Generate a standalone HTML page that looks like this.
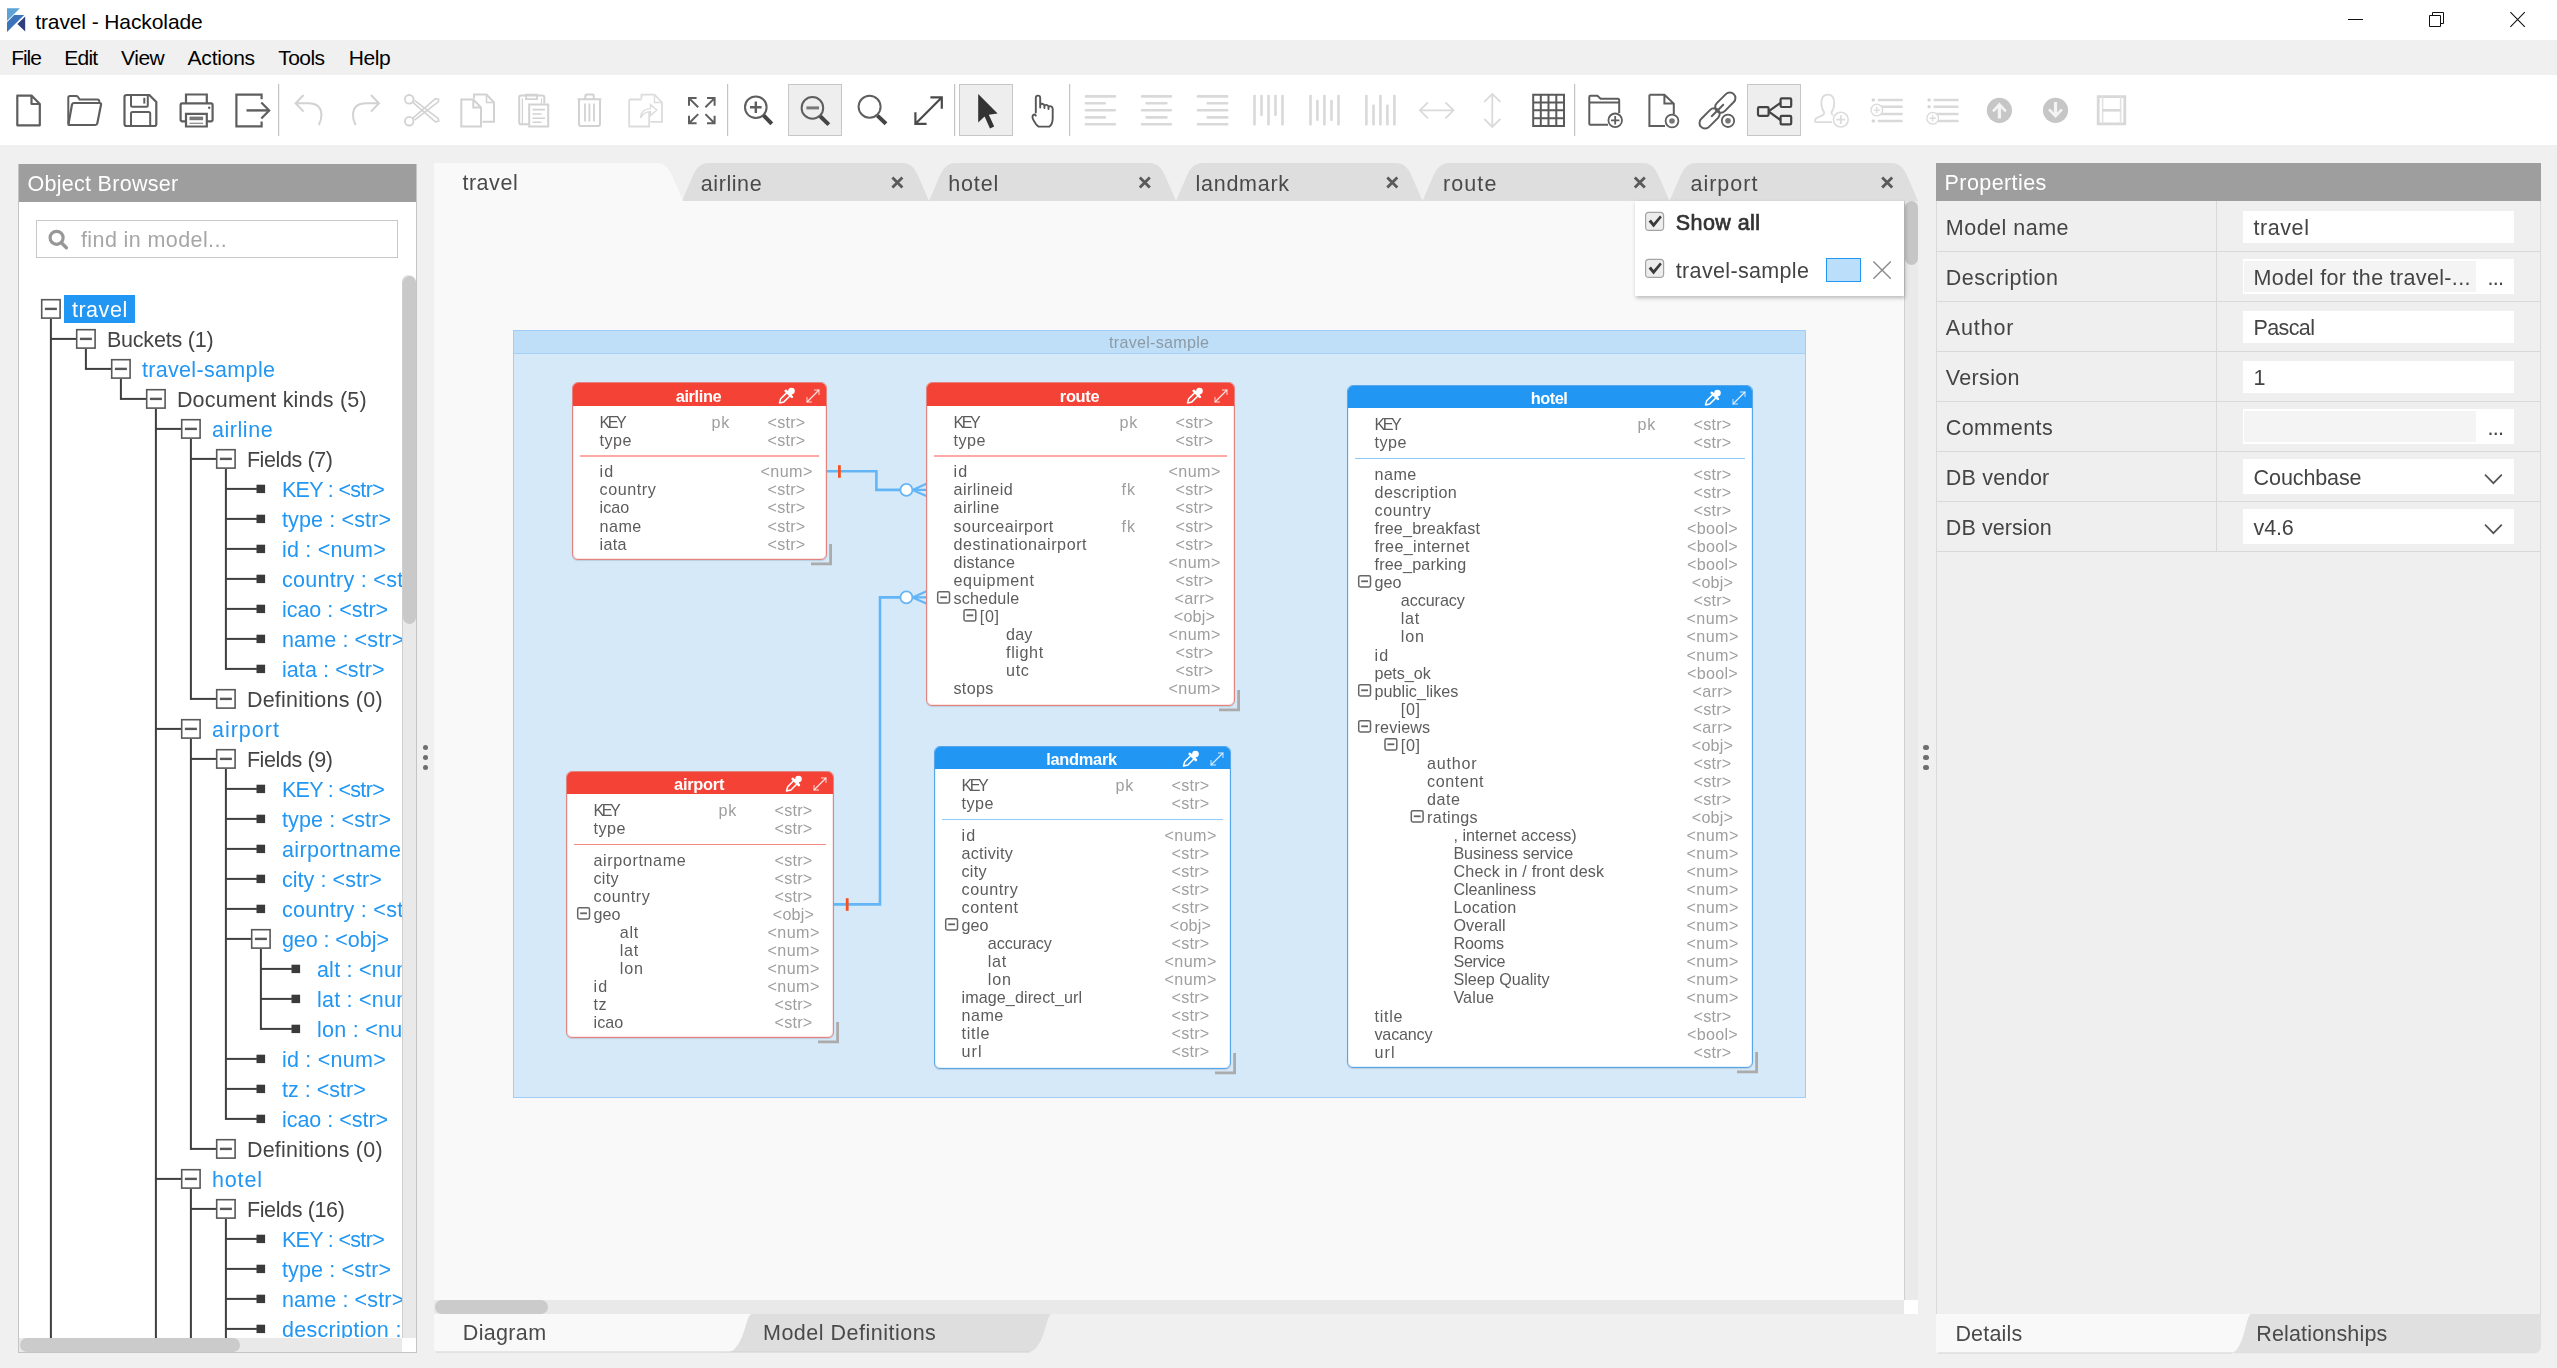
<!DOCTYPE html>
<html lang="en"><head><meta charset="utf-8"><title>travel - Hackolade</title>
<style>
html,body{margin:0;padding:0}
body{width:2557px;height:1368px;background:#f0f0f0;font-family:"Liberation Sans", sans-serif}
#r{position:relative;width:2557px;height:1368px;overflow:hidden;background:#f0f0f0}
#r div,#r span{position:absolute}
#r span{white-space:pre}
#tl{left:0;top:0;width:2557px;height:1368px;will-change:transform}
</style></head><body><div id="r">
<div style="left:0px;top:0px;width:2557px;height:40px;background:#ffffff;"></div>
<svg style="position:absolute;left:0;top:0" width="2557" height="40" viewBox="0 0 2557 40"><path d="M7,8.2 H19.9 L7,21 Z" fill="#5da3d6"/><path d="M14.2,15 H24.2 L7,32 V22.3 Z" fill="#3c74ba"/><path d="M25.2,16.4 V31.5 L17.4,23.9 Z" fill="#2e3f7d"/><path d="M2348,19.5 H2363" stroke="#111" stroke-width="1"/><path d="M2429.5,15.5 H2440.5 V26.5 H2429.5 Z M2432.5,15 V12.5 H2443.5 V23.5 H2441" stroke="#111" stroke-width="1" fill="none" stroke-linejoin="miter"/><path d="M2510.4,12.2 L2524.8,26.8 M2524.8,12.2 L2510.4,26.8" stroke="#111" stroke-width="1.1"/></svg>
<span style="left:35.2px;top:11px;font-size:21px;line-height:21px;color:#000;letter-spacing:-0.1px;">travel - Hackolade</span>
<div style="left:0px;top:40px;width:2557px;height:35px;background:#f0f0f0;"></div>
<span style="left:11.3px;top:47px;font-size:21px;line-height:21px;color:#000;letter-spacing:-1.11px;">File</span>
<span style="left:64.3px;top:47px;font-size:21px;line-height:21px;color:#000;letter-spacing:-0.8px;">Edit</span>
<span style="left:121.0px;top:47px;font-size:21px;line-height:21px;color:#000;letter-spacing:-0.45px;">View</span>
<span style="left:187.6px;top:47px;font-size:21px;line-height:21px;color:#000;letter-spacing:-0.23px;">Actions</span>
<span style="left:278.3px;top:47px;font-size:21px;line-height:21px;color:#000;letter-spacing:-0.56px;">Tools</span>
<span style="left:348.8px;top:47px;font-size:21px;line-height:21px;color:#000;letter-spacing:-0.47px;">Help</span>
<div style="left:0px;top:75px;width:2557px;height:70px;background:#ffffff;"></div>
<svg style="position:absolute;left:0;top:0" width="2557" height="150" viewBox="0 0 2557 150"><rect x="788.5" y="84.5" width="53.0" height="51" fill="#eeeeee" stroke="#c6c6c6" stroke-width="1"/><rect x="959.5" y="84.5" width="53.0" height="51" fill="#eeeeee" stroke="#c6c6c6" stroke-width="1"/><rect x="1747.5" y="84.5" width="53.0" height="51" fill="#eeeeee" stroke="#c6c6c6" stroke-width="1"/><rect x="278" y="84" width="1.2" height="52" fill="#c4c4c4"/><rect x="727" y="84" width="1.2" height="52" fill="#c4c4c4"/><rect x="954" y="84" width="1.2" height="52" fill="#c4c4c4"/><rect x="1069" y="84" width="1.2" height="52" fill="#c4c4c4"/><rect x="1574" y="84" width="1.2" height="52" fill="#c4c4c4"/><path d="M17.3,95.6 H31.5 L39.8,104 V125.3 H17.3 Z M31.5,95.6 V104 H39.8" stroke="#5e5e5e" stroke-width="2.2" fill="none" stroke-linejoin="round"/><path d="M68.3,124 V97.6 Q68.3,96 70,96 H76 Q77.3,96 78,97 L79.6,99.4 H97.3 Q99.3,99.4 99.3,101.4 V103" stroke="#5e5e5e" stroke-width="2" fill="none" /><path d="M68.4,124.6 L72,104.6 Q72.4,103 74,103 H99.6 Q101.4,103 101,104.8 L97.3,123.4 Q97,125 95.3,125 H69.5 Q68.2,125 68.4,124.2" stroke="#5e5e5e" stroke-width="2.2" fill="none" /><path d="M126.5,95 H149.3 L156.3,102 V124 Q156.3,126 154.3,126 H126.5 Q124.5,126 124.5,124 V97 Q124.5,95 126.5,95 Z" stroke="#5e5e5e" stroke-width="2.2" fill="none" /><path d="M131,95.5 V105.3 Q131,106.8 132.5,106.8 H146.3 Q147.8,106.8 147.8,105.3 V95.5" stroke="#5e5e5e" stroke-width="2" fill="none" /><path d="M144.3,97.8 V103.6" stroke="#5e5e5e" stroke-width="2" fill="none" /><path d="M131,126 V113.6 Q131,112 132.5,112 H148.6 Q150.2,112 150.2,113.6 V126" stroke="#5e5e5e" stroke-width="2" fill="none" /><path d="M186,103 V94.5 H206.8 V103" stroke="#5e5e5e" stroke-width="2.2" fill="none" /><path d="M186,121.3 H182.2 Q180.6,121.3 180.6,119.6 V105 Q180.6,103.3 182.2,103.3 H211 Q212.6,103.3 212.6,105 V119.6 Q212.6,121.3 211,121.3 H207" stroke="#5e5e5e" stroke-width="2.2" fill="none" /><path d="M186,113.8 H206.8 V126.5 H186 Z" stroke="#5e5e5e" stroke-width="2.2" fill="none" /><rect x="189.5" y="116.6" width="13.6" height="3.6" fill="#777"/><path d="M189.5,123.3 H203" stroke="#888" stroke-width="1.2" fill="none" /><circle cx="209.2" cy="107.7" r="1.2" fill="#5e5e5e"/><path d="M261.6,99.3 V94.6 H236.4 V126.4 H261.6 V121.6" stroke="#5e5e5e" stroke-width="2.2" fill="none" /><path d="M246.5,110.4 H268.6" stroke="#5e5e5e" stroke-width="2.4" fill="none" /><path d="M261.3,102.4 L269.2,110.4 L261.3,118.4" stroke="#5e5e5e" stroke-width="2.2" fill="none" /><path d="M303.6,95 L295.6,103.3 L303.6,111.6 M295.8,103.3 H308 C318,103.3 321.4,108.5 321.4,115 C321.4,119 320.5,122 318.8,125" stroke="#d2d2d2" stroke-width="2" fill="none" /><path d="M371,95 L379,103.3 L371,111.6 M378.8,103.3 H366.5 C356.5,103.3 353,108.5 353,115 C353,119 354,122 355.6,125" stroke="#d2d2d2" stroke-width="2" fill="none" /><circle cx="409.2" cy="99.3" r="4.3" fill="none" stroke="#d2d2d2" stroke-width="1.8"/><circle cx="409.2" cy="121.2" r="4.3" fill="none" stroke="#d2d2d2" stroke-width="1.8"/><path d="M412.6,102.2 L435.5,121.8 L438.7,121.2 L438.3,118.6 L414.5,100.4" stroke="#d2d2d2" stroke-width="1.6" fill="none" /><path d="M412.6,118.3 L435.5,98.7 L438.7,99.3 L438.3,101.9 L414.5,120.1" stroke="#d2d2d2" stroke-width="1.6" fill="none" /><path d="M474,98.5 V94.6 H486.5 L494,102.5 V121.8 H482.5" stroke="#d2d2d2" stroke-width="2" fill="none" /><path d="M486.5,94.6 V102.5 H494" stroke="#d2d2d2" stroke-width="1.6" fill="none" /><path d="M461.3,99.5 H473.3 L481,107.5 V126.5 H461.3 Z M473.3,99.5 V107.5 H481" stroke="#d2d2d2" stroke-width="2" fill="none" /><path d="M528.5,124.2 H521 Q519.2,124.2 519.2,122.4 V97.2 Q519.2,95.4 521,95.4 H542.5 Q544.3,95.4 544.3,97.2 V103.6" stroke="#d2d2d2" stroke-width="2" fill="none" /><path d="M522.4,124 V98.6 M541.5,98.6 V103.4" stroke="#d2d2d2" stroke-width="1.2" fill="none" /><path d="M526,94.6 H537 V99.2 H526 Z" stroke="#d2d2d2" stroke-width="1.8" fill="none" /><path d="M529.2,104.4 H548.2 V126.6 H529.2 Z" stroke="#d2d2d2" stroke-width="2" fill="none" /><path d="M532.5,109.6 H545 M532.5,114 H541.5 M532.5,118.3 H545 M532.5,122.3 H541.5" stroke="#d2d2d2" stroke-width="1.6" fill="none" /><path d="M577.6,99.3 H601.3 M585.3,98.6 V96 Q585.3,94.6 586.7,94.6 H592.3 Q593.8,94.6 593.8,96 V98.6" stroke="#d2d2d2" stroke-width="2" fill="none" /><path d="M579,99.6 V124 Q579,126 581,126 H598 Q600,126 600,124 V99.6" stroke="#d2d2d2" stroke-width="2" fill="none" /><path d="M585,103.5 V121.6 M589.4,103.5 V121.6 M594,103.5 V121.6" stroke="#d2d2d2" stroke-width="1.8" fill="none" /><path d="M641.5,98.5 V94.6 H654.5 L662,102.5 V121.8 H650.5" stroke="#dcdcdc" stroke-width="1.8" fill="none" /><path d="M654.5,94.6 V102.5 H662" stroke="#dcdcdc" stroke-width="1.4" fill="none" /><path d="M629.2,99.5 H641.5 M649.2,112 V126.5 H629.2 V99.5" stroke="#dcdcdc" stroke-width="1.8" fill="none" /><path d="M640.5,118 C641,111 645,108.6 650.5,108.6 V104.6 L656.8,110 L650.5,115.6 V111.6 C646,111.6 643,113 640.5,118 Z" stroke="#dcdcdc" stroke-width="1.4" fill="none" /><path d="M698.1999999999999,107.3 L689.0,98.10000000000001 M696.6,98.10000000000001 H689.0 V105.7" stroke="#5e5e5e" stroke-width="2" fill="none" /><path d="M698.1999999999999,114.10000000000001 L689.0,123.3 M696.6,123.3 H689.0 V115.7" stroke="#5e5e5e" stroke-width="2" fill="none" /><path d="M705.4,107.3 L714.5999999999999,98.10000000000001 M706.9999999999999,98.10000000000001 H714.5999999999999 V105.7" stroke="#5e5e5e" stroke-width="2" fill="none" /><path d="M705.4,114.10000000000001 L714.5999999999999,123.3 M706.9999999999999,123.3 H714.5999999999999 V115.7" stroke="#5e5e5e" stroke-width="2" fill="none" /><circle cx="755.8" cy="107.2" r="10.8" fill="none" stroke="#5e5e5e" stroke-width="2"/><path d="M750,107.2 H761.6 M755.8,101.4 V113" stroke="#5e5e5e" stroke-width="2.4" fill="none" /><path d="M763.6,115.4 L771.8,123.8" stroke="#444" stroke-width="4" fill="none" /><circle cx="812.4" cy="107.9" r="10.8" fill="none" stroke="#5e5e5e" stroke-width="2"/><path d="M806.4,107.9 H819" stroke="#777" stroke-width="3" fill="none" /><path d="M820.2,116.2 L828.8,124.6" stroke="#444" stroke-width="4" fill="none" /><circle cx="869.6" cy="106.8" r="11" fill="none" stroke="#5e5e5e" stroke-width="2"/><path d="M877.4,115.6 L886,123.8" stroke="#444" stroke-width="4" fill="none" /><path d="M916,123.2 L941.2,98 M930.4,97.4 H941.8 V108.8 M915.4,112.2 V123.8 H926.6" stroke="#4a4a4a" stroke-width="2.2" fill="none" /><path d="M978.2,94 V122.4 L984.6,116.6 L990,128.4 L994.2,126.4 L988.8,114.8 L997.6,113.4 Z" fill="#333"/><path d="M1035.8,112.6 V98 Q1035.8,95.6 1038,95.6 Q1040.2,95.6 1040.2,98 V107.5 M1040.2,105.4 Q1040.4,103.6 1042.3,103.8 Q1044.2,104 1044.4,106 V108 M1044.4,106.3 Q1044.8,104.6 1046.6,104.9 Q1048.3,105.2 1048.5,107 V109 M1048.5,107.4 Q1049,105.8 1050.7,106.2 Q1052.6,106.6 1052.7,108.8 V118 Q1052.7,124 1049.5,126.6 H1038.5 Q1036,125 1033.6,120.4 Q1031.6,116.6 1033.2,115 Q1034.6,114 1035.8,115.6" stroke="#555" stroke-width="1.9" fill="none" stroke-linejoin="round" stroke-linecap="round"/><rect x="1084.7" y="95.10000000000001" width="31.3" height="2.6" rx="1" fill="#d9d9d9"/><rect x="1084.7" y="102.0" width="21.3" height="2.6" rx="1" fill="#d9d9d9"/><rect x="1084.7" y="109.0" width="31.3" height="2.6" rx="1" fill="#d9d9d9"/><rect x="1084.7" y="116.10000000000001" width="21.3" height="2.6" rx="1" fill="#d9d9d9"/><rect x="1084.7" y="123.0" width="31.3" height="2.6" rx="1" fill="#d9d9d9"/><rect x="1140.8" y="95.10000000000001" width="31.2" height="2.6" rx="1" fill="#d9d9d9"/><rect x="1145.4" y="102.0" width="22.2" height="2.6" rx="1" fill="#d9d9d9"/><rect x="1140.8" y="109.0" width="31.2" height="2.6" rx="1" fill="#d9d9d9"/><rect x="1145.4" y="116.10000000000001" width="22.2" height="2.6" rx="1" fill="#d9d9d9"/><rect x="1140.8" y="123.0" width="31.2" height="2.6" rx="1" fill="#d9d9d9"/><rect x="1196.7" y="95.10000000000001" width="31.7" height="2.6" rx="1" fill="#d9d9d9"/><rect x="1206.5" y="102.0" width="21.9" height="2.6" rx="1" fill="#d9d9d9"/><rect x="1196.7" y="109.0" width="31.7" height="2.6" rx="1" fill="#d9d9d9"/><rect x="1206.5" y="116.10000000000001" width="21.9" height="2.6" rx="1" fill="#d9d9d9"/><rect x="1196.7" y="123.0" width="31.7" height="2.6" rx="1" fill="#d9d9d9"/><rect x="1253.2" y="94.8" width="2.6" height="30.6" rx="1" fill="#d9d9d9"/><rect x="1260.2" y="94.8" width="2.6" height="21.3" rx="1" fill="#d9d9d9"/><rect x="1267.2" y="94.8" width="2.6" height="30.6" rx="1" fill="#d9d9d9"/><rect x="1274.2" y="94.8" width="2.6" height="21.3" rx="1" fill="#d9d9d9"/><rect x="1281.2" y="94.8" width="2.6" height="30.6" rx="1" fill="#d9d9d9"/><rect x="1309.2" y="94.8" width="2.6" height="30.6" rx="1" fill="#d9d9d9"/><rect x="1316.1000000000001" y="99.7" width="2.6" height="21.3" rx="1" fill="#d9d9d9"/><rect x="1323.1000000000001" y="94.8" width="2.6" height="30.6" rx="1" fill="#d9d9d9"/><rect x="1330.2" y="99.7" width="2.6" height="21.3" rx="1" fill="#d9d9d9"/><rect x="1337.2" y="94.8" width="2.6" height="30.6" rx="1" fill="#d9d9d9"/><rect x="1365.1000000000001" y="94.8" width="2.6" height="30.6" rx="1" fill="#d9d9d9"/><rect x="1372.2" y="104.6" width="2.6" height="20.8" rx="1" fill="#d9d9d9"/><rect x="1379.1000000000001" y="94.8" width="2.6" height="30.6" rx="1" fill="#d9d9d9"/><rect x="1386.1000000000001" y="104.6" width="2.6" height="20.8" rx="1" fill="#d9d9d9"/><rect x="1393.1000000000001" y="94.8" width="2.6" height="30.6" rx="1" fill="#d9d9d9"/><path d="M1420,110.3 H1453.4 M1427.9,102.4 L1419.9,110.3 L1427.9,118.3 M1445.4,102.4 L1453.5,110.3 L1445.4,118.3" stroke="#dadada" stroke-width="1.8" fill="none" /><path d="M1492.3,94 V126.8 M1484.3,101.9 L1492.3,93.9 L1500.4,101.9 M1484.3,118.9 L1492.3,126.9 L1500.4,118.9" stroke="#dadada" stroke-width="1.8" fill="none" /><path d="M1533.2,93.8 V127 M1540.8,93.8 V127 M1548.5,93.8 V127 M1556.3,93.8 V127 M1564,93.8 V127 M1532.2,94.8 H1565 M1532.2,102.5 H1565 M1532.2,110.3 H1565 M1532.2,118.2 H1565 M1532.2,126 H1565 " stroke="#5a5a5a" stroke-width="2" fill="none" /><path d="M1589.3,124.8 V97 Q1589.3,95.8 1590.5,95.8 H1597.4 L1600.6,98.8 H1617.6 Q1619.2,98.8 1619.2,100.4 V113 M1589.3,102.6 H1619.2 M1589.3,124.8 H1608" stroke="#5e5e5e" stroke-width="2" fill="none" /><circle cx="1615.2" cy="120.3" r="6.8" fill="#fff" stroke="#5e5e5e" stroke-width="1.8"/><path d="M1611,120.3 H1619.4 M1615.2,116.1 V124.5" stroke="#5e5e5e" stroke-width="1.8" fill="none" /><path d="M1649.4,94.7 H1664.4 L1673.8,103.6 V114 M1649.4,94.7 V125.9 H1665 M1664.4,94.7 V103.6 H1673.8" stroke="#5e5e5e" stroke-width="2" fill="none" /><circle cx="1672" cy="121" r="6.4" fill="#fff" stroke="#5e5e5e" stroke-width="1.8"/><circle cx="1672" cy="121" r="2.8" fill="#777"/><rect x="-12" y="-5.6" width="24" height="11.2" rx="5.6" fill="none" stroke="#5e5e5e" stroke-width="2" transform="translate(1725.3,102.6) rotate(-45)"/><rect x="-12" y="-5.6" width="24" height="11.2" rx="5.6" fill="none" stroke="#5e5e5e" stroke-width="2" transform="translate(1709.6,118.4) rotate(-45)"/><path d="M1711.2,116.8 L1723.8,104.2" stroke="#5e5e5e" stroke-width="2" fill="none" /><circle cx="1728" cy="120.8" r="6.2" fill="#fff" stroke="#5e5e5e" stroke-width="1.8"/><circle cx="1728" cy="120.8" r="2.8" fill="#777"/><path d="M1768.5,111.4 L1780.5,102.8 M1768.5,111.4 L1780.5,120" stroke="#444" stroke-width="2.2" fill="none" /><rect x="1758" y="107.2" width="10.6" height="8.6" rx="1.2" fill="#eee" stroke="#444" stroke-width="2.2"/><rect x="1780.6" y="98.4" width="10.6" height="8.6" rx="1.2" fill="#eee" stroke="#444" stroke-width="2.2"/><rect x="1780.6" y="115.8" width="10.6" height="8.6" rx="1.2" fill="#eee" stroke="#444" stroke-width="2.2"/><path d="M1815,122.2 V120.4 Q1815,118.6 1817.4,117.6 L1822.4,115.4 Q1824.4,114.4 1824.2,112.4 Q1821.4,108.6 1821.4,103 Q1821.4,94.6 1827.8,94.6 Q1834.2,94.6 1834.2,103 Q1834.2,108.6 1831.4,112.4 Q1831.3,114.2 1833,115.2 M1815,122.2 H1832" stroke="#dcdcdc" stroke-width="1.8" fill="none" /><circle cx="1840.8" cy="119.6" r="7.4" fill="#fff" stroke="#dcdcdc" stroke-width="1.6"/><path d="M1836.4,119.6 H1845.2 M1840.8,115.2 V124" stroke="#dcdcdc" stroke-width="1.8" fill="none" /><rect x="1877.7" y="98.7" width="25.1" height="2.6" rx="1" fill="#d9d9d9"/><rect x="1871.8" y="98.5" width="3" height="3" rx="0.8" fill="#d4d4d4"/><rect x="1877.7" y="105.5" width="25.1" height="2.6" rx="1" fill="#d9d9d9"/><rect x="1877.7" y="112.7" width="25.1" height="2.6" rx="1" fill="#d9d9d9"/><rect x="1877.7" y="119.7" width="25.1" height="2.6" rx="1" fill="#d9d9d9"/><rect x="1871.8" y="119.5" width="3" height="3" rx="0.8" fill="#d4d4d4"/><circle cx="1876.8" cy="110.1" r="5.8" fill="#fff" stroke="#dcdcdc" stroke-width="1.4"/><path d="M1873.6,110.1 H1880.0 M1876.8,106.89999999999999 V113.3" stroke="#dcdcdc" stroke-width="1.4" fill="none" /><rect x="1933.5" y="98.7" width="25.2" height="2.6" rx="1" fill="#d9d9d9"/><rect x="1927.6" y="98.5" width="3" height="3" rx="0.8" fill="#d4d4d4"/><rect x="1933.5" y="105.5" width="25.2" height="2.6" rx="1" fill="#d9d9d9"/><rect x="1927.6" y="105.3" width="3" height="3" rx="0.8" fill="#d4d4d4"/><rect x="1933.5" y="112.7" width="25.2" height="2.6" rx="1" fill="#d9d9d9"/><rect x="1933.5" y="119.7" width="25.2" height="2.6" rx="1" fill="#d9d9d9"/><circle cx="1932.7" cy="118.3" r="5.8" fill="#fff" stroke="#dcdcdc" stroke-width="1.4"/><path d="M1929.5,118.3 H1935.9 M1932.7,115.1 V121.5" stroke="#dcdcdc" stroke-width="1.4" fill="none" /><circle cx="1999.4" cy="110.3" r="12.6" fill="#c6c6c6"/><path d="M1999.4,102.6 L2006.8000000000002,110.4 L2005.0,112.2 L2001.0,108.2 V118.6 H1997.8000000000002 V108.2 L1993.8000000000002,112.2 L1992.0,110.4 Z" fill="#f4f4f4"/><circle cx="2055.5" cy="110.3" r="12.6" fill="#c6c6c6"/><path d="M2055.5,118 L2062.9,110.2 L2061.1,108.4 L2057.1,112.4 V102 H2053.9 V112.4 L2049.9,108.4 L2048.1,110.2 Z" fill="#f4f4f4"/><path d="M2098.2,96.6 H2124.8 V123.8 H2098.2 Z" stroke="#d8d8d8" stroke-width="2.8" fill="none" /><path d="M2102.6,96.6 V123.8 M2120.6,96.6 V123.8" stroke="#e2e2e2" stroke-width="1.6" fill="none" /><path d="M2102.6,110.3 H2120.6" stroke="#d8d8d8" stroke-width="2.6" fill="none" /></svg>
<div style="left:18px;top:164px;width:399px;height:1188.5px;background:#ffffff;box-sizing:border-box;border:1px solid #c4c4c4;border-top:0"></div>
<div style="left:19px;top:164px;width:397px;height:37.5px;background:#9e9e9e;"></div>
<div style="left:36px;top:220px;width:362px;height:37.5px;background:#ffffff;box-sizing:border-box;border:1px solid #c8c8c8"></div>
<svg style="position:absolute;left:44px;top:226px" width="28" height="28" viewBox="44 226 28 28"><circle cx="56.6" cy="237.8" r="6.5" fill="none" stroke="#979797" stroke-width="3.2"/><path d="M61.6,243 L66.4,247.8" stroke="#979797" stroke-width="3.4" stroke-linecap="round"/></svg>
<div style="left:20px;top:258px;width:382px;height:1080px;overflow:hidden"><div style="left:-20px;top:-258px;width:500px;height:1368px">
<div style="left:64px;top:295px;width:71px;height:28px;background:#2196f3;"></div>
<svg style="position:absolute;left:0;top:0" width="420" height="1368" viewBox="0 0 420 1368"><rect x="49.9" y="318.9" width="2" height="1021.1" fill="#3f3f3f"/><rect x="84.9" y="348.9" width="2" height="21.0" fill="#3f3f3f"/><rect x="119.9" y="378.9" width="2" height="21.0" fill="#3f3f3f"/><rect x="154.9" y="408.9" width="2" height="931.1" fill="#3f3f3f"/><rect x="189.9" y="438.9" width="2" height="261.0" fill="#3f3f3f"/><rect x="224.9" y="468.9" width="2" height="201.0" fill="#3f3f3f"/><rect x="189.9" y="738.9" width="2" height="411.0" fill="#3f3f3f"/><rect x="224.9" y="768.9" width="2" height="351.0" fill="#3f3f3f"/><rect x="259.9" y="948.9" width="2" height="81.0" fill="#3f3f3f"/><rect x="189.9" y="1188.9" width="2" height="151.1" fill="#3f3f3f"/><rect x="224.9" y="1218.9" width="2" height="121.1" fill="#3f3f3f"/><rect x="41.7" y="299.7" width="18.4" height="18.4" fill="#fff" stroke="#585858" stroke-width="1.6"/><rect x="44.9" y="307.7" width="12" height="2.4" fill="#585858"/><rect x="50.9" y="337.9" width="25.5" height="2" fill="#3f3f3f"/><rect x="76.7" y="329.7" width="18.4" height="18.4" fill="#fff" stroke="#585858" stroke-width="1.6"/><rect x="79.9" y="337.7" width="12" height="2.4" fill="#585858"/><rect x="85.9" y="367.9" width="25.5" height="2" fill="#3f3f3f"/><rect x="111.7" y="359.7" width="18.4" height="18.4" fill="#fff" stroke="#585858" stroke-width="1.6"/><rect x="114.9" y="367.7" width="12" height="2.4" fill="#585858"/><rect x="120.9" y="397.9" width="25.5" height="2" fill="#3f3f3f"/><rect x="146.7" y="389.7" width="18.4" height="18.4" fill="#fff" stroke="#585858" stroke-width="1.6"/><rect x="149.9" y="397.7" width="12" height="2.4" fill="#585858"/><rect x="155.9" y="427.9" width="25.5" height="2" fill="#3f3f3f"/><rect x="181.7" y="419.7" width="18.4" height="18.4" fill="#fff" stroke="#585858" stroke-width="1.6"/><rect x="184.9" y="427.7" width="12" height="2.4" fill="#585858"/><rect x="190.9" y="457.9" width="25.5" height="2" fill="#3f3f3f"/><rect x="216.7" y="449.7" width="18.4" height="18.4" fill="#fff" stroke="#585858" stroke-width="1.6"/><rect x="219.9" y="457.7" width="12" height="2.4" fill="#585858"/><rect x="225.9" y="487.9" width="31.0" height="2" fill="#3f3f3f"/><rect x="256.5" y="484.7" width="8.6" height="8.4" fill="#3a3a3a"/><rect x="225.9" y="517.9" width="31.0" height="2" fill="#3f3f3f"/><rect x="256.5" y="514.7" width="8.6" height="8.4" fill="#3a3a3a"/><rect x="225.9" y="547.9" width="31.0" height="2" fill="#3f3f3f"/><rect x="256.5" y="544.7" width="8.6" height="8.4" fill="#3a3a3a"/><rect x="225.9" y="577.9" width="31.0" height="2" fill="#3f3f3f"/><rect x="256.5" y="574.7" width="8.6" height="8.4" fill="#3a3a3a"/><rect x="225.9" y="607.9" width="31.0" height="2" fill="#3f3f3f"/><rect x="256.5" y="604.7" width="8.6" height="8.4" fill="#3a3a3a"/><rect x="225.9" y="637.9" width="31.0" height="2" fill="#3f3f3f"/><rect x="256.5" y="634.7" width="8.6" height="8.4" fill="#3a3a3a"/><rect x="225.9" y="667.9" width="31.0" height="2" fill="#3f3f3f"/><rect x="256.5" y="664.7" width="8.6" height="8.4" fill="#3a3a3a"/><rect x="190.9" y="697.9" width="25.5" height="2" fill="#3f3f3f"/><rect x="216.7" y="689.7" width="18.4" height="18.4" fill="#fff" stroke="#585858" stroke-width="1.6"/><rect x="219.9" y="697.7" width="12" height="2.4" fill="#585858"/><rect x="155.9" y="727.9" width="25.5" height="2" fill="#3f3f3f"/><rect x="181.7" y="719.7" width="18.4" height="18.4" fill="#fff" stroke="#585858" stroke-width="1.6"/><rect x="184.9" y="727.7" width="12" height="2.4" fill="#585858"/><rect x="190.9" y="757.9" width="25.5" height="2" fill="#3f3f3f"/><rect x="216.7" y="749.7" width="18.4" height="18.4" fill="#fff" stroke="#585858" stroke-width="1.6"/><rect x="219.9" y="757.7" width="12" height="2.4" fill="#585858"/><rect x="225.9" y="787.9" width="31.0" height="2" fill="#3f3f3f"/><rect x="256.5" y="784.7" width="8.6" height="8.4" fill="#3a3a3a"/><rect x="225.9" y="817.9" width="31.0" height="2" fill="#3f3f3f"/><rect x="256.5" y="814.7" width="8.6" height="8.4" fill="#3a3a3a"/><rect x="225.9" y="847.9" width="31.0" height="2" fill="#3f3f3f"/><rect x="256.5" y="844.7" width="8.6" height="8.4" fill="#3a3a3a"/><rect x="225.9" y="877.9" width="31.0" height="2" fill="#3f3f3f"/><rect x="256.5" y="874.7" width="8.6" height="8.4" fill="#3a3a3a"/><rect x="225.9" y="907.9" width="31.0" height="2" fill="#3f3f3f"/><rect x="256.5" y="904.7" width="8.6" height="8.4" fill="#3a3a3a"/><rect x="225.9" y="937.9" width="25.5" height="2" fill="#3f3f3f"/><rect x="251.7" y="929.7" width="18.4" height="18.4" fill="#fff" stroke="#585858" stroke-width="1.6"/><rect x="254.9" y="937.7" width="12" height="2.4" fill="#585858"/><rect x="260.9" y="967.9" width="31.0" height="2" fill="#3f3f3f"/><rect x="291.5" y="964.7" width="8.6" height="8.4" fill="#3a3a3a"/><rect x="260.9" y="997.9" width="31.0" height="2" fill="#3f3f3f"/><rect x="291.5" y="994.7" width="8.6" height="8.4" fill="#3a3a3a"/><rect x="260.9" y="1027.9" width="31.0" height="2" fill="#3f3f3f"/><rect x="291.5" y="1024.7" width="8.6" height="8.4" fill="#3a3a3a"/><rect x="225.9" y="1057.9" width="31.0" height="2" fill="#3f3f3f"/><rect x="256.5" y="1054.7" width="8.6" height="8.4" fill="#3a3a3a"/><rect x="225.9" y="1087.9" width="31.0" height="2" fill="#3f3f3f"/><rect x="256.5" y="1084.7" width="8.6" height="8.4" fill="#3a3a3a"/><rect x="225.9" y="1117.9" width="31.0" height="2" fill="#3f3f3f"/><rect x="256.5" y="1114.7" width="8.6" height="8.4" fill="#3a3a3a"/><rect x="190.9" y="1147.9" width="25.5" height="2" fill="#3f3f3f"/><rect x="216.7" y="1139.7" width="18.4" height="18.4" fill="#fff" stroke="#585858" stroke-width="1.6"/><rect x="219.9" y="1147.7" width="12" height="2.4" fill="#585858"/><rect x="155.9" y="1177.9" width="25.5" height="2" fill="#3f3f3f"/><rect x="181.7" y="1169.7" width="18.4" height="18.4" fill="#fff" stroke="#585858" stroke-width="1.6"/><rect x="184.9" y="1177.7" width="12" height="2.4" fill="#585858"/><rect x="190.9" y="1207.9" width="25.5" height="2" fill="#3f3f3f"/><rect x="216.7" y="1199.7" width="18.4" height="18.4" fill="#fff" stroke="#585858" stroke-width="1.6"/><rect x="219.9" y="1207.7" width="12" height="2.4" fill="#585858"/><rect x="225.9" y="1237.9" width="31.0" height="2" fill="#3f3f3f"/><rect x="256.5" y="1234.7" width="8.6" height="8.4" fill="#3a3a3a"/><rect x="225.9" y="1267.9" width="31.0" height="2" fill="#3f3f3f"/><rect x="256.5" y="1264.7" width="8.6" height="8.4" fill="#3a3a3a"/><rect x="225.9" y="1297.9" width="31.0" height="2" fill="#3f3f3f"/><rect x="256.5" y="1294.7" width="8.6" height="8.4" fill="#3a3a3a"/><rect x="225.9" y="1327.9" width="31.0" height="2" fill="#3f3f3f"/><rect x="256.5" y="1324.7" width="8.6" height="8.4" fill="#3a3a3a"/></svg>
</div></div>
<div style="left:402px;top:201.5px;width:14px;height:1136.5px;background:#ffffff;"></div>
<div style="left:402px;top:275px;width:14px;height:1063px;background:#e9e9e9;box-sizing:border-box;border-left:1px solid #cfcfcf;border-radius:7px 7px 0 0"></div>
<div style="left:402.6px;top:276px;width:13.2px;height:348px;background:#c9c9c9;border-radius:6.6px"></div>
<div style="left:19px;top:1338px;width:383px;height:14px;background:#e9e9e9;"></div>
<div style="left:20px;top:1338px;width:219.5px;height:14px;background:#cbcbcb;border-radius:7px"></div>
<div style="left:402px;top:1338px;width:14px;height:14px;background:#ffffff;"></div>
<div style="left:18px;top:1352px;width:399px;height:1px;background:#c4c4c4;"></div>
<div style="left:422.7px;top:744.8px;width:5.2px;height:5.2px;background:#6e6e6e;border-radius:50%"></div>
<div style="left:422.7px;top:754.8px;width:5.2px;height:5.2px;background:#6e6e6e;border-radius:50%"></div>
<div style="left:422.7px;top:764.8px;width:5.2px;height:5.2px;background:#6e6e6e;border-radius:50%"></div>
<div style="left:1923.4px;top:744.8px;width:5.2px;height:5.2px;background:#6e6e6e;border-radius:50%"></div>
<div style="left:1923.4px;top:754.8px;width:5.2px;height:5.2px;background:#6e6e6e;border-radius:50%"></div>
<div style="left:1923.4px;top:764.8px;width:5.2px;height:5.2px;background:#6e6e6e;border-radius:50%"></div>
<div style="left:434px;top:201px;width:1484px;height:1112.5px;background:#f9f9f9;"></div>
<svg style="position:absolute;left:0;top:150px" width="2557" height="60" viewBox="0 150 2557 60"><defs><linearGradient id="tg" x1="0" y1="0" x2="0" y2="1"><stop offset="0" stop-color="#e0e0e0"/><stop offset="1" stop-color="#dcdcdc"/></linearGradient></defs><path d="M682.0,201 L691.0,180 C695.0,170 699.0,163 709.0,163 H902.0 C912.0,163 916.0,170 920.0,180 L929.0,201 Z" fill="#dedede"/><path d="M929.0,201 L938.0,180 C942.0,170 946.0,163 956.0,163 H1149.0 C1159.0,163 1163.0,170 1167.0,180 L1176.0,201 Z" fill="#dedede"/><path d="M1176.0,201 L1185.0,180 C1189.0,170 1193.0,163 1203.0,163 H1395.5 C1405.5,163 1409.5,170 1413.5,180 L1422.5,201 Z" fill="#dedede"/><path d="M1422.5,201 L1431.5,180 C1435.5,170 1439.5,163 1449.5,163 H1642.5 C1652.5,163 1656.5,170 1660.5,180 L1669.5,201 Z" fill="#dedede"/><path d="M1669.5,201 L1678.5,180 C1682.5,170 1686.5,163 1696.5,163 H1891.0 C1901.0,163 1905.0,170 1909.0,180 L1918.0,201 Z" fill="#dedede"/><path d="M434,201 V163 H656 C666,163 670,170 674,180 L683,201 Z" fill="#f9f9f9"/><path d="M892.4,177.6 L902.4,187.6 M902.4,177.6 L892.4,187.6" stroke="#5a5a5a" stroke-width="2.8"/><path d="M1139.8,177.6 L1149.8,187.6 M1149.8,177.6 L1139.8,187.6" stroke="#5a5a5a" stroke-width="2.8"/><path d="M1387.3,177.6 L1397.3,187.6 M1397.3,177.6 L1387.3,187.6" stroke="#5a5a5a" stroke-width="2.8"/><path d="M1634.8,177.6 L1644.8,187.6 M1644.8,177.6 L1634.8,187.6" stroke="#5a5a5a" stroke-width="2.8"/><path d="M1882.2,177.6 L1892.2,187.6 M1892.2,177.6 L1882.2,187.6" stroke="#5a5a5a" stroke-width="2.8"/></svg>
<div style="left:1904px;top:201px;width:14px;height:1099px;background:#eaeaea;box-sizing:border-box;border-left:1px solid #d0d0d0"></div>
<div style="left:1904.5px;top:201px;width:13.5px;height:64px;background:#c6c6c6;border-radius:6.5px"></div>
<div style="left:434px;top:1300px;width:1470px;height:14px;background:#e9e9e9;"></div>
<div style="left:434.5px;top:1300px;width:113.5px;height:14px;background:#cbcbcb;border-radius:7px"></div>
<div style="left:1904px;top:1300px;width:14px;height:14px;background:#ffffff;"></div>
<svg style="position:absolute;left:0;top:1310px" width="2557" height="58" viewBox="0 1310 2557 58"><path d="M748,1314 H1052 C1046,1314 1046,1340 1034,1350 Q1031,1352.3 1026,1352.3 H720 Z" fill="#dedede"/><path d="M434,1314 H752 C746,1314 746,1338 734,1349.5 Q731,1352.3 726,1352.3 H440 Q434,1352.3 434,1346 Z" fill="#f9f9f9"/><path d="M436,1352 H1030" stroke="#d2d2d2" stroke-width="1" fill="none"/><path d="M2240,1314 H2541 V1346 Q2541,1353.2 2534,1353.2 H2230 Z" fill="#e0e0e0"/><path d="M1936,1314 H2251.5 C2246,1314 2246,1339 2236,1350.5 Q2233,1353.2 2228,1353.2 H1940 Q1936,1353.2 1936,1349 Z" fill="#f9f9f9"/><path d="M1938,1353 H2232" stroke="#d2d2d2" stroke-width="1" fill="none"/></svg>
<div style="left:513px;top:330px;width:1293px;height:767.5px;background:#d6e9f9;box-sizing:border-box;border:1px solid #9fcdf5"></div>
<div style="left:514px;top:331px;width:1291px;height:22.5px;background:#bfdff8;"></div>
<div style="left:514px;top:353px;width:1291px;height:1px;background:#a6d1f6;"></div>
<svg style="position:absolute;left:820px;top:450px" width="120" height="480" viewBox="820 450 120 480"><path d="M826,471.3 H876.4 V489.9 H900" stroke="#64b5f6" stroke-width="2.6" fill="none"/><path d="M834,904.4 H880 V597.4 H900" stroke="#64b5f6" stroke-width="2.6" fill="none"/><path d="M912,489.9 H927 M912.5,489.9 L927,483.6 M912.5,489.9 L927,496.2" stroke="#64b5f6" stroke-width="2.2" fill="none"/><path d="M912,597.4 H927 M912.5,597.4 L927,591.1 M912.5,597.4 L927,603.7" stroke="#64b5f6" stroke-width="2.2" fill="none"/><circle cx="906.4" cy="489.9" r="6" fill="#fff" stroke="#64b5f6" stroke-width="1.8"/><circle cx="906.4" cy="597.4" r="6" fill="#fff" stroke="#64b5f6" stroke-width="1.8"/><rect x="838" y="465.2" width="2.8" height="12.6" fill="#f4511e"/><rect x="845.8" y="898.2" width="2.8" height="12.6" fill="#f4511e"/></svg>
<svg style="position:absolute;left:807px;top:540px" width="30" height="30" viewBox="807 540 30 30"><path d="M811,563.8 H830.6 V544" stroke="#ababab" stroke-width="2.8" fill="none"/></svg>
<div style="left:572px;top:382px;width:255px;height:178px;background:#ffffff;box-sizing:border-box;border:1px solid #e2847f;border-radius:6px;overflow:hidden;box-shadow:0 1px 1px rgba(0,0,0,0.12), inset 0 0 0 1px #fde4e2"></div>
<div style="left:573px;top:383px;width:253px;height:23px;background:#f44336;border-radius:5px 5px 0 0"></div>
<svg style="position:absolute;left:771px;top:382px" width="56" height="24" viewBox="771 382 56 24"><path d="M779.5,402.9 L780.7,398.8 L787.9,391.6 L791.1,394.8 L783.9,401.9 Z" fill="none" stroke="#fff" stroke-width="1.5" stroke-linejoin="round"/><path d="M785.7,390.8 L791.9,396.9" stroke="#fff" stroke-width="2.6" stroke-linecap="round"/><circle cx="791.5" cy="391.1" r="3.3" fill="#fff"/><path d="M807.0,402.0 L819.0,390.0" stroke="rgba(255,255,255,0.85)" stroke-width="1.2" fill="none"/><path d="M814.0,390.0 H819.0 V395.0 M807.0,397.0 V402.0 H812.0" stroke="rgba(255,255,255,0.55)" stroke-width="1.4" fill="none"/></svg>
<div style="left:580px;top:455px;width:239px;height:2px;background:#ffa9a6;"></div>
<svg style="position:absolute;left:1215px;top:685.6px" width="30" height="30" viewBox="1215 685.6 30 30"><path d="M1219,709.4 H1238.6 V689.6" stroke="#ababab" stroke-width="2.8" fill="none"/></svg>
<div style="left:926px;top:382px;width:309px;height:323.6px;background:#ffffff;box-sizing:border-box;border:1px solid #e2847f;border-radius:6px;overflow:hidden;box-shadow:0 1px 1px rgba(0,0,0,0.12), inset 0 0 0 1px #fde4e2"></div>
<div style="left:927px;top:383px;width:307px;height:23px;background:#f44336;border-radius:5px 5px 0 0"></div>
<svg style="position:absolute;left:1179px;top:382px" width="56" height="24" viewBox="1179 382 56 24"><path d="M1187.5,402.9 L1188.7,398.8 L1195.9,391.6 L1199.1,394.8 L1191.9,401.9 Z" fill="none" stroke="#fff" stroke-width="1.5" stroke-linejoin="round"/><path d="M1193.7,390.8 L1199.9,396.9" stroke="#fff" stroke-width="2.6" stroke-linecap="round"/><circle cx="1199.5" cy="391.1" r="3.3" fill="#fff"/><path d="M1215.0,402.0 L1227.0,390.0" stroke="rgba(255,255,255,0.85)" stroke-width="1.2" fill="none"/><path d="M1222.0,390.0 H1227.0 V395.0 M1215.0,397.0 V402.0 H1220.0" stroke="rgba(255,255,255,0.55)" stroke-width="1.4" fill="none"/></svg>
<div style="left:934px;top:455px;width:293px;height:2px;background:#ffa9a6;"></div>
<svg style="position:absolute;left:926px;top:382px" width="309" height="323.6" viewBox="926 382 309 323.6"><rect x="937.7" y="591.7" width="11.8" height="11.2" rx="1.6" fill="#fff" stroke="#666" stroke-width="1.5"/><rect x="940.2" y="596.4" width="6.8" height="1.8" fill="#666"/><rect x="964.0" y="609.7" width="11.8" height="11.2" rx="1.6" fill="#fff" stroke="#666" stroke-width="1.5"/><rect x="966.5" y="614.4" width="6.8" height="1.8" fill="#666"/></svg>
<svg style="position:absolute;left:814px;top:1018px" width="30" height="30" viewBox="814 1018 30 30"><path d="M818,1041.8 H837.6 V1022" stroke="#ababab" stroke-width="2.8" fill="none"/></svg>
<div style="left:566px;top:771px;width:268px;height:267px;background:#ffffff;box-sizing:border-box;border:1px solid #e2847f;border-radius:6px;overflow:hidden;box-shadow:0 1px 1px rgba(0,0,0,0.12), inset 0 0 0 1px #fde4e2"></div>
<div style="left:567px;top:772px;width:266px;height:22px;background:#f44336;border-radius:5px 5px 0 0"></div>
<svg style="position:absolute;left:778px;top:771px" width="56" height="23" viewBox="778 771 56 23"><path d="M786.5,791.0 L787.7,786.8 L794.9,779.5 L798.1,782.8 L790.9,790.0 Z" fill="none" stroke="#fff" stroke-width="1.5" stroke-linejoin="round"/><path d="M792.7,778.8 L798.9,785.0" stroke="#fff" stroke-width="2.6" stroke-linecap="round"/><circle cx="798.5" cy="779.1" r="3.3" fill="#fff"/><path d="M814.0,790.0 L826.0,778.0" stroke="rgba(255,255,255,0.85)" stroke-width="1.2" fill="none"/><path d="M821.0,778.0 H826.0 V783.0 M814.0,785.0 V790.0 H819.0" stroke="rgba(255,255,255,0.55)" stroke-width="1.4" fill="none"/></svg>
<div style="left:574px;top:844px;width:252px;height:1px;background:#f28b84;"></div>
<svg style="position:absolute;left:566px;top:771px" width="268" height="267.0" viewBox="566 771 268 267.0"><rect x="577.7" y="907.7" width="11.8" height="11.2" rx="1.6" fill="#fff" stroke="#666" stroke-width="1.5"/><rect x="580.2" y="912.4" width="6.8" height="1.8" fill="#666"/></svg>
<svg style="position:absolute;left:1211px;top:1048.5px" width="30" height="30" viewBox="1211 1048.5 30 30"><path d="M1215,1072.3 H1234.6 V1052.5" stroke="#ababab" stroke-width="2.8" fill="none"/></svg>
<div style="left:934px;top:746px;width:297px;height:322.5px;background:#ffffff;box-sizing:border-box;border:1px solid #58a6ea;border-radius:6px;overflow:hidden;box-shadow:0 1px 1px rgba(0,0,0,0.12), inset 0 0 0 1px #e3f1fd"></div>
<div style="left:935px;top:747px;width:295px;height:22px;background:#2196f3;border-radius:5px 5px 0 0"></div>
<svg style="position:absolute;left:1175px;top:746px" width="56" height="23" viewBox="1175 746 56 23"><path d="M1183.5,766.0 L1184.7,761.8 L1191.9,754.5 L1195.1,757.8 L1187.9,765.0 Z" fill="none" stroke="#fff" stroke-width="1.5" stroke-linejoin="round"/><path d="M1189.7,753.8 L1195.9,760.0" stroke="#fff" stroke-width="2.6" stroke-linecap="round"/><circle cx="1195.5" cy="754.1" r="3.3" fill="#fff"/><path d="M1211.0,765.0 L1223.0,753.0" stroke="rgba(255,255,255,0.85)" stroke-width="1.2" fill="none"/><path d="M1218.0,753.0 H1223.0 V758.0 M1211.0,760.0 V765.0 H1216.0" stroke="rgba(255,255,255,0.55)" stroke-width="1.4" fill="none"/></svg>
<div style="left:942px;top:819px;width:281px;height:1px;background:#90caf9;"></div>
<svg style="position:absolute;left:934px;top:746px" width="297" height="322.5" viewBox="934 746 297 322.5"><rect x="945.7" y="918.7" width="11.8" height="11.2" rx="1.6" fill="#fff" stroke="#666" stroke-width="1.5"/><rect x="948.2" y="923.4" width="6.8" height="1.8" fill="#666"/></svg>
<svg style="position:absolute;left:1733px;top:1048.2px" width="30" height="30" viewBox="1733 1048.2 30 30"><path d="M1737,1072.0 H1756.6 V1052.2" stroke="#ababab" stroke-width="2.8" fill="none"/></svg>
<div style="left:1347px;top:385px;width:406px;height:683.2px;background:#ffffff;box-sizing:border-box;border:1px solid #58a6ea;border-radius:6px;overflow:hidden;box-shadow:0 1px 1px rgba(0,0,0,0.12), inset 0 0 0 1px #e3f1fd"></div>
<div style="left:1348px;top:386px;width:404px;height:22px;background:#2196f3;border-radius:5px 5px 0 0"></div>
<svg style="position:absolute;left:1697px;top:385px" width="56" height="23" viewBox="1697 385 56 23"><path d="M1705.5,404.9 L1706.7,400.8 L1713.9,393.6 L1717.1,396.8 L1709.9,403.9 Z" fill="none" stroke="#fff" stroke-width="1.5" stroke-linejoin="round"/><path d="M1711.7,392.8 L1717.9,398.9" stroke="#fff" stroke-width="2.6" stroke-linecap="round"/><circle cx="1717.5" cy="393.1" r="3.3" fill="#fff"/><path d="M1733.0,404.0 L1745.0,392.0" stroke="rgba(255,255,255,0.85)" stroke-width="1.2" fill="none"/><path d="M1740.0,392.0 H1745.0 V397.0 M1733.0,399.0 V404.0 H1738.0" stroke="rgba(255,255,255,0.55)" stroke-width="1.4" fill="none"/></svg>
<div style="left:1355px;top:458px;width:390px;height:1px;background:#90caf9;"></div>
<svg style="position:absolute;left:1347px;top:385px" width="406" height="683.2" viewBox="1347 385 406 683.2"><rect x="1358.7" y="575.7" width="11.8" height="11.2" rx="1.6" fill="#fff" stroke="#666" stroke-width="1.5"/><rect x="1361.2" y="580.4" width="6.8" height="1.8" fill="#666"/><rect x="1358.7" y="684.7" width="11.8" height="11.2" rx="1.6" fill="#fff" stroke="#666" stroke-width="1.5"/><rect x="1361.2" y="689.4" width="6.8" height="1.8" fill="#666"/><rect x="1358.7" y="720.7" width="11.8" height="11.2" rx="1.6" fill="#fff" stroke="#666" stroke-width="1.5"/><rect x="1361.2" y="725.4" width="6.8" height="1.8" fill="#666"/><rect x="1385.0" y="738.7" width="11.8" height="11.2" rx="1.6" fill="#fff" stroke="#666" stroke-width="1.5"/><rect x="1387.5" y="743.4" width="6.8" height="1.8" fill="#666"/><rect x="1411.3" y="810.7" width="11.8" height="11.2" rx="1.6" fill="#fff" stroke="#666" stroke-width="1.5"/><rect x="1413.8" y="815.4" width="6.8" height="1.8" fill="#666"/></svg>
<div style="left:1634.8px;top:201px;width:269.2px;height:95px;background:#ffffff;box-shadow:1px 2px 4px rgba(0,0,0,0.26)"></div>
<svg style="position:absolute;left:1643px;top:209.5px" width="24" height="24" viewBox="1643 209.5 24 24"><rect x="1645.6" y="211.9" width="18" height="18" rx="3.2" fill="#ededed" stroke="#a4a4a4" stroke-width="1.2"/><path d="M1648.6,221.1 L1651,219.1 L1653.6,222.5 L1660,215.1 L1661.8,216.7 L1653.6,227.1 Z" fill="#3a3a3a"/></svg>
<svg style="position:absolute;left:1643px;top:257px" width="24" height="24" viewBox="1643 257 24 24"><rect x="1645.6" y="259.4" width="18" height="18" rx="3.2" fill="#ededed" stroke="#a4a4a4" stroke-width="1.2"/><path d="M1648.6,268.6 L1651,266.6 L1653.6,270 L1660,262.6 L1661.8,264.2 L1653.6,274.6 Z" fill="#3a3a3a"/></svg>
<div style="left:1826px;top:258px;width:35px;height:24px;background:#bbdefb;box-sizing:border-box;border:1.5px solid #2196f3"></div>
<svg style="position:absolute;left:1870px;top:258px" width="24" height="24" viewBox="1870 258 24 24"><path d="M1873.4,261.4 L1890.8,278.8 M1890.8,261.4 L1873.4,278.8" stroke="#8a8a8a" stroke-width="1.4"/></svg>
<div style="left:1936px;top:163px;width:605px;height:1151px;background:#efefef;box-sizing:border-box;border:1px solid #dadada;border-bottom:0"></div>
<div style="left:1936px;top:163px;width:605px;height:38px;background:#9e9e9e;"></div>
<div style="left:2216px;top:201px;width:1px;height:350px;background:#d9d9d9;"></div>
<div style="left:1937px;top:250.5px;width:603px;height:1px;background:#d9d9d9;"></div>
<div style="left:2243px;top:211px;width:271px;height:32px;background:#ffffff;"></div>
<div style="left:1937px;top:300.5px;width:603px;height:1px;background:#d9d9d9;"></div>
<div style="left:2243px;top:259px;width:271px;height:35px;background:#ffffff;"></div>
<div style="left:2244px;top:261px;width:232px;height:31px;background:#f4f4f4;"></div>
<div style="left:1937px;top:350.5px;width:603px;height:1px;background:#d9d9d9;"></div>
<div style="left:2243px;top:311px;width:271px;height:32px;background:#ffffff;"></div>
<div style="left:1937px;top:400.5px;width:603px;height:1px;background:#d9d9d9;"></div>
<div style="left:2243px;top:361px;width:271px;height:32px;background:#ffffff;"></div>
<div style="left:1937px;top:450.5px;width:603px;height:1px;background:#d9d9d9;"></div>
<div style="left:2243px;top:409px;width:271px;height:35px;background:#ffffff;"></div>
<div style="left:2244px;top:411px;width:232px;height:31px;background:#f4f4f4;"></div>
<div style="left:1937px;top:500.5px;width:603px;height:1px;background:#d9d9d9;"></div>
<div style="left:2243px;top:459px;width:271px;height:35px;background:#ffffff;"></div>
<svg style="position:absolute;left:2480px;top:465px" width="26" height="24" viewBox="2480 465 26 24"><path d="M2485,474.6 L2493.4,483.2 L2501.8,474.6" stroke="#555" stroke-width="1.7" fill="none"/></svg>
<div style="left:1937px;top:550.5px;width:603px;height:1px;background:#d9d9d9;"></div>
<div style="left:2243px;top:509px;width:271px;height:35px;background:#ffffff;"></div>
<svg style="position:absolute;left:2480px;top:515px" width="26" height="24" viewBox="2480 515 26 24"><path d="M2485,524.6 L2493.4,533.2 L2501.8,524.6" stroke="#555" stroke-width="1.7" fill="none"/></svg>
<div id="tl">
<span style="left:27.5px;top:174px;font-size:21.52px;line-height:21.52px;color:#ffffff;letter-spacing:0.28px;">Object Browser</span>
<span style="left:81.0px;top:230px;font-size:21.52px;line-height:21.52px;color:#a6a6a6;letter-spacing:0.39px;">find in model...</span>
<div style="left:20px;top:258px;width:382px;height:1080px;overflow:hidden"><div style="left:-20px;top:-258px;width:500px;height:1368px">
<span style="left:71.9px;top:300px;font-size:21.52px;line-height:21.52px;color:#ffffff;letter-spacing:0.54px;">travel</span>
<span style="left:106.9px;top:330px;font-size:21.52px;line-height:21.52px;color:#444444;letter-spacing:-0.21px;">Buckets (1)</span>
<span style="left:141.9px;top:360px;font-size:21.52px;line-height:21.52px;color:#2196f3;letter-spacing:0.33px;">travel-sample</span>
<span style="left:176.9px;top:390px;font-size:21.52px;line-height:21.52px;color:#444444;letter-spacing:0.19px;">Document kinds (5)</span>
<span style="left:211.9px;top:420px;font-size:21.52px;line-height:21.52px;color:#2196f3;letter-spacing:0.57px;">airline</span>
<span style="left:246.9px;top:450px;font-size:21.52px;line-height:21.52px;color:#444444;letter-spacing:-0.41px;">Fields (7)</span>
<span style="left:281.9px;top:480px;font-size:21.52px;line-height:21.52px;color:#2196f3;letter-spacing:-0.68px;">KEY : &lt;str&gt;</span>
<span style="left:281.9px;top:510px;font-size:21.52px;line-height:21.52px;color:#2196f3;letter-spacing:0.14px;">type : &lt;str&gt;</span>
<span style="left:281.9px;top:540px;font-size:21.52px;line-height:21.52px;color:#2196f3;letter-spacing:0.24px;">id : &lt;num&gt;</span>
<span style="left:281.9px;top:570px;font-size:21.52px;line-height:21.52px;color:#2196f3;letter-spacing:0.29px;">country : &lt;str&gt;</span>
<span style="left:281.9px;top:600px;font-size:21.52px;line-height:21.52px;color:#2196f3;letter-spacing:-0.02px;">icao : &lt;str&gt;</span>
<span style="left:281.9px;top:630px;font-size:21.52px;line-height:21.52px;color:#2196f3;letter-spacing:0.14px;">name : &lt;str&gt;</span>
<span style="left:281.9px;top:660px;font-size:21.52px;line-height:21.52px;color:#2196f3;letter-spacing:0.09px;">iata : &lt;str&gt;</span>
<span style="left:246.9px;top:690px;font-size:21.52px;line-height:21.52px;color:#444444;letter-spacing:0.21px;">Definitions (0)</span>
<span style="left:211.9px;top:720px;font-size:21.52px;line-height:21.52px;color:#2196f3;letter-spacing:1.02px;">airport</span>
<span style="left:246.9px;top:750px;font-size:21.52px;line-height:21.52px;color:#444444;letter-spacing:-0.41px;">Fields (9)</span>
<span style="left:281.9px;top:780px;font-size:21.52px;line-height:21.52px;color:#2196f3;letter-spacing:-0.68px;">KEY : &lt;str&gt;</span>
<span style="left:281.9px;top:810px;font-size:21.52px;line-height:21.52px;color:#2196f3;letter-spacing:0.14px;">type : &lt;str&gt;</span>
<span style="left:281.9px;top:840px;font-size:21.52px;line-height:21.52px;color:#2196f3;letter-spacing:0.42px;">airportname : &lt;str&gt;</span>
<span style="left:281.9px;top:870px;font-size:21.52px;line-height:21.52px;color:#2196f3;letter-spacing:0.06px;">city : &lt;str&gt;</span>
<span style="left:281.9px;top:900px;font-size:21.52px;line-height:21.52px;color:#2196f3;letter-spacing:0.29px;">country : &lt;str&gt;</span>
<span style="left:281.9px;top:930px;font-size:21.52px;line-height:21.52px;color:#2196f3;letter-spacing:-0.06px;">geo : &lt;obj&gt;</span>
<span style="left:316.9px;top:960px;font-size:21.52px;line-height:21.52px;color:#2196f3;letter-spacing:0.25px;">alt : &lt;num&gt;</span>
<span style="left:316.9px;top:990px;font-size:21.52px;line-height:21.52px;color:#2196f3;letter-spacing:0.25px;">lat : &lt;num&gt;</span>
<span style="left:316.9px;top:1020px;font-size:21.52px;line-height:21.52px;color:#2196f3;letter-spacing:0.28px;">lon : &lt;num&gt;</span>
<span style="left:281.9px;top:1050px;font-size:21.52px;line-height:21.52px;color:#2196f3;letter-spacing:0.24px;">id : &lt;num&gt;</span>
<span style="left:281.9px;top:1080px;font-size:21.52px;line-height:21.52px;color:#2196f3;letter-spacing:0.02px;">tz : &lt;str&gt;</span>
<span style="left:281.9px;top:1110px;font-size:21.52px;line-height:21.52px;color:#2196f3;letter-spacing:-0.02px;">icao : &lt;str&gt;</span>
<span style="left:246.9px;top:1140px;font-size:21.52px;line-height:21.52px;color:#444444;letter-spacing:0.21px;">Definitions (0)</span>
<span style="left:211.9px;top:1170px;font-size:21.52px;line-height:21.52px;color:#2196f3;letter-spacing:0.86px;">hotel</span>
<span style="left:246.9px;top:1200px;font-size:21.52px;line-height:21.52px;color:#444444;letter-spacing:-0.37px;">Fields (16)</span>
<span style="left:281.9px;top:1230px;font-size:21.52px;line-height:21.52px;color:#2196f3;letter-spacing:-0.68px;">KEY : &lt;str&gt;</span>
<span style="left:281.9px;top:1260px;font-size:21.52px;line-height:21.52px;color:#2196f3;letter-spacing:0.14px;">type : &lt;str&gt;</span>
<span style="left:281.9px;top:1290px;font-size:21.52px;line-height:21.52px;color:#2196f3;letter-spacing:0.14px;">name : &lt;str&gt;</span>
<span style="left:281.9px;top:1320px;font-size:21.52px;line-height:21.52px;color:#2196f3;letter-spacing:0.29px;">description : &lt;str&gt;</span>
</div></div>
<span style="left:462.4px;top:173px;font-size:21.52px;line-height:21.52px;color:#4a4a4a;letter-spacing:0.54px;">travel</span>
<span style="left:700.8px;top:174px;font-size:21.52px;line-height:21.52px;color:#4a4a4a;letter-spacing:0.57px;">airline</span>
<span style="left:948.2px;top:174px;font-size:21.52px;line-height:21.52px;color:#4a4a4a;letter-spacing:0.86px;">hotel</span>
<span style="left:1195.6px;top:174px;font-size:21.52px;line-height:21.52px;color:#4a4a4a;letter-spacing:0.71px;">landmark</span>
<span style="left:1443.0px;top:174px;font-size:21.52px;line-height:21.52px;color:#4a4a4a;letter-spacing:1.08px;">route</span>
<span style="left:1690.4px;top:174px;font-size:21.52px;line-height:21.52px;color:#4a4a4a;letter-spacing:1.02px;">airport</span>
<span style="left:462.8px;top:1323px;font-size:21.52px;line-height:21.52px;color:#4a4a4a;letter-spacing:0.33px;">Diagram</span>
<span style="left:763.0px;top:1323px;font-size:21.52px;line-height:21.52px;color:#4a4a4a;letter-spacing:0.49px;">Model Definitions</span>
<span style="left:1955.4px;top:1324px;font-size:21.52px;line-height:21.52px;color:#4a4a4a;letter-spacing:0.17px;">Details</span>
<span style="left:2256.2px;top:1324px;font-size:21.52px;line-height:21.52px;color:#4a4a4a;letter-spacing:0.16px;">Relationships</span>
<span style="left:1109.1px;top:334px;font-size:16.14px;line-height:16.14px;color:#8c9aa6;letter-spacing:0.26px;">travel-sample</span>
<span style="left:675.7px;top:388px;font-size:16.4px;line-height:16.4px;color:#ffffff;letter-spacing:-0.38px;font-weight:700;">airline</span>
<span style="left:599.5px;top:414px;font-size:16.14px;line-height:16.14px;color:#5c5c5c;letter-spacing:-2.54px;">KEY</span>
<span style="left:711.4px;top:414px;font-size:16.14px;line-height:16.14px;color:#9e9e9e;letter-spacing:0.89px;">pk</span>
<span style="left:767.6px;top:414px;font-size:16.14px;line-height:16.14px;color:#9e9e9e;letter-spacing:0.21px;">&lt;str&gt;</span>
<span style="left:599.5px;top:432px;font-size:16.14px;line-height:16.14px;color:#5c5c5c;letter-spacing:0.51px;">type</span>
<span style="left:767.6px;top:432px;font-size:16.14px;line-height:16.14px;color:#9e9e9e;letter-spacing:0.21px;">&lt;str&gt;</span>
<span style="left:599.5px;top:463px;font-size:16.14px;line-height:16.14px;color:#5c5c5c;letter-spacing:1.06px;">id</span>
<span style="left:760.4px;top:463px;font-size:16.14px;line-height:16.14px;color:#9e9e9e;letter-spacing:0.43px;">&lt;num&gt;</span>
<span style="left:599.5px;top:481px;font-size:16.14px;line-height:16.14px;color:#5c5c5c;letter-spacing:0.57px;">country</span>
<span style="left:767.6px;top:481px;font-size:16.14px;line-height:16.14px;color:#9e9e9e;letter-spacing:0.21px;">&lt;str&gt;</span>
<span style="left:599.5px;top:499px;font-size:16.14px;line-height:16.14px;color:#5c5c5c;letter-spacing:0.05px;">icao</span>
<span style="left:767.6px;top:499px;font-size:16.14px;line-height:16.14px;color:#9e9e9e;letter-spacing:0.21px;">&lt;str&gt;</span>
<span style="left:599.5px;top:518px;font-size:16.14px;line-height:16.14px;color:#5c5c5c;letter-spacing:0.5px;">name</span>
<span style="left:767.6px;top:518px;font-size:16.14px;line-height:16.14px;color:#9e9e9e;letter-spacing:0.21px;">&lt;str&gt;</span>
<span style="left:599.5px;top:536px;font-size:16.14px;line-height:16.14px;color:#5c5c5c;letter-spacing:0.36px;">iata</span>
<span style="left:767.6px;top:536px;font-size:16.14px;line-height:16.14px;color:#9e9e9e;letter-spacing:0.21px;">&lt;str&gt;</span>
<span style="left:1059.8px;top:388px;font-size:16.4px;line-height:16.4px;color:#ffffff;letter-spacing:-0.3px;font-weight:700;">route</span>
<span style="left:953.5px;top:414px;font-size:16.14px;line-height:16.14px;color:#5c5c5c;letter-spacing:-2.54px;">KEY</span>
<span style="left:1119.4px;top:414px;font-size:16.14px;line-height:16.14px;color:#9e9e9e;letter-spacing:0.89px;">pk</span>
<span style="left:1175.6px;top:414px;font-size:16.14px;line-height:16.14px;color:#9e9e9e;letter-spacing:0.21px;">&lt;str&gt;</span>
<span style="left:953.5px;top:432px;font-size:16.14px;line-height:16.14px;color:#5c5c5c;letter-spacing:0.51px;">type</span>
<span style="left:1175.6px;top:432px;font-size:16.14px;line-height:16.14px;color:#9e9e9e;letter-spacing:0.21px;">&lt;str&gt;</span>
<span style="left:953.5px;top:463px;font-size:16.14px;line-height:16.14px;color:#5c5c5c;letter-spacing:1.06px;">id</span>
<span style="left:1168.4px;top:463px;font-size:16.14px;line-height:16.14px;color:#9e9e9e;letter-spacing:0.43px;">&lt;num&gt;</span>
<span style="left:953.5px;top:481px;font-size:16.14px;line-height:16.14px;color:#5c5c5c;letter-spacing:0.46px;">airlineid</span>
<span style="left:1121.6px;top:481px;font-size:16.14px;line-height:16.14px;color:#9e9e9e;letter-spacing:1.03px;">fk</span>
<span style="left:1175.6px;top:481px;font-size:16.14px;line-height:16.14px;color:#9e9e9e;letter-spacing:0.21px;">&lt;str&gt;</span>
<span style="left:953.5px;top:499px;font-size:16.14px;line-height:16.14px;color:#5c5c5c;letter-spacing:0.43px;">airline</span>
<span style="left:1175.6px;top:499px;font-size:16.14px;line-height:16.14px;color:#9e9e9e;letter-spacing:0.21px;">&lt;str&gt;</span>
<span style="left:953.5px;top:518px;font-size:16.14px;line-height:16.14px;color:#5c5c5c;letter-spacing:0.47px;">sourceairport</span>
<span style="left:1121.6px;top:518px;font-size:16.14px;line-height:16.14px;color:#9e9e9e;letter-spacing:1.03px;">fk</span>
<span style="left:1175.6px;top:518px;font-size:16.14px;line-height:16.14px;color:#9e9e9e;letter-spacing:0.21px;">&lt;str&gt;</span>
<span style="left:953.5px;top:536px;font-size:16.14px;line-height:16.14px;color:#5c5c5c;letter-spacing:0.55px;">destinationairport</span>
<span style="left:1175.6px;top:536px;font-size:16.14px;line-height:16.14px;color:#9e9e9e;letter-spacing:0.21px;">&lt;str&gt;</span>
<span style="left:953.5px;top:554px;font-size:16.14px;line-height:16.14px;color:#5c5c5c;letter-spacing:0.21px;">distance</span>
<span style="left:1168.4px;top:554px;font-size:16.14px;line-height:16.14px;color:#9e9e9e;letter-spacing:0.43px;">&lt;num&gt;</span>
<span style="left:953.5px;top:572px;font-size:16.14px;line-height:16.14px;color:#5c5c5c;letter-spacing:0.64px;">equipment</span>
<span style="left:1175.6px;top:572px;font-size:16.14px;line-height:16.14px;color:#9e9e9e;letter-spacing:0.21px;">&lt;str&gt;</span>
<span style="left:953.5px;top:590px;font-size:16.14px;line-height:16.14px;color:#5c5c5c;letter-spacing:0.16px;">schedule</span>
<span style="left:1174.6px;top:590px;font-size:16.14px;line-height:16.14px;color:#9e9e9e;letter-spacing:0.27px;">&lt;arr&gt;</span>
<span style="left:979.8px;top:608px;font-size:16.14px;line-height:16.14px;color:#5c5c5c;letter-spacing:0.69px;">[0]</span>
<span style="left:1173.8px;top:608px;font-size:16.14px;line-height:16.14px;color:#9e9e9e;letter-spacing:0.19px;">&lt;obj&gt;</span>
<span style="left:1006.1px;top:626px;font-size:16.14px;line-height:16.14px;color:#5c5c5c;letter-spacing:0.14px;">day</span>
<span style="left:1168.4px;top:626px;font-size:16.14px;line-height:16.14px;color:#9e9e9e;letter-spacing:0.43px;">&lt;num&gt;</span>
<span style="left:1006.1px;top:644px;font-size:16.14px;line-height:16.14px;color:#5c5c5c;letter-spacing:0.6px;">flight</span>
<span style="left:1175.6px;top:644px;font-size:16.14px;line-height:16.14px;color:#9e9e9e;letter-spacing:0.21px;">&lt;str&gt;</span>
<span style="left:1006.1px;top:662px;font-size:16.14px;line-height:16.14px;color:#5c5c5c;letter-spacing:0.66px;">utc</span>
<span style="left:1175.6px;top:662px;font-size:16.14px;line-height:16.14px;color:#9e9e9e;letter-spacing:0.21px;">&lt;str&gt;</span>
<span style="left:953.5px;top:680px;font-size:16.14px;line-height:16.14px;color:#5c5c5c;letter-spacing:0.3px;">stops</span>
<span style="left:1168.4px;top:680px;font-size:16.14px;line-height:16.14px;color:#9e9e9e;letter-spacing:0.43px;">&lt;num&gt;</span>
<span style="left:674.1px;top:776px;font-size:16.4px;line-height:16.4px;color:#ffffff;letter-spacing:-0.27px;font-weight:700;">airport</span>
<span style="left:593.5px;top:802px;font-size:16.14px;line-height:16.14px;color:#5c5c5c;letter-spacing:-2.54px;">KEY</span>
<span style="left:718.4px;top:802px;font-size:16.14px;line-height:16.14px;color:#9e9e9e;letter-spacing:0.89px;">pk</span>
<span style="left:774.6px;top:802px;font-size:16.14px;line-height:16.14px;color:#9e9e9e;letter-spacing:0.21px;">&lt;str&gt;</span>
<span style="left:593.5px;top:820px;font-size:16.14px;line-height:16.14px;color:#5c5c5c;letter-spacing:0.51px;">type</span>
<span style="left:774.6px;top:820px;font-size:16.14px;line-height:16.14px;color:#9e9e9e;letter-spacing:0.21px;">&lt;str&gt;</span>
<span style="left:593.5px;top:852px;font-size:16.14px;line-height:16.14px;color:#5c5c5c;letter-spacing:0.61px;">airportname</span>
<span style="left:774.6px;top:852px;font-size:16.14px;line-height:16.14px;color:#9e9e9e;letter-spacing:0.21px;">&lt;str&gt;</span>
<span style="left:593.5px;top:870px;font-size:16.14px;line-height:16.14px;color:#5c5c5c;letter-spacing:0.28px;">city</span>
<span style="left:774.6px;top:870px;font-size:16.14px;line-height:16.14px;color:#9e9e9e;letter-spacing:0.21px;">&lt;str&gt;</span>
<span style="left:593.5px;top:888px;font-size:16.14px;line-height:16.14px;color:#5c5c5c;letter-spacing:0.57px;">country</span>
<span style="left:774.6px;top:888px;font-size:16.14px;line-height:16.14px;color:#9e9e9e;letter-spacing:0.21px;">&lt;str&gt;</span>
<span style="left:593.5px;top:906px;font-size:16.14px;line-height:16.14px;color:#5c5c5c;letter-spacing:-0.02px;">geo</span>
<span style="left:772.8px;top:906px;font-size:16.14px;line-height:16.14px;color:#9e9e9e;letter-spacing:0.19px;">&lt;obj&gt;</span>
<span style="left:619.8px;top:924px;font-size:16.14px;line-height:16.14px;color:#5c5c5c;letter-spacing:0.66px;">alt</span>
<span style="left:767.4px;top:924px;font-size:16.14px;line-height:16.14px;color:#9e9e9e;letter-spacing:0.43px;">&lt;num&gt;</span>
<span style="left:619.8px;top:942px;font-size:16.14px;line-height:16.14px;color:#5c5c5c;letter-spacing:0.66px;">lat</span>
<span style="left:767.4px;top:942px;font-size:16.14px;line-height:16.14px;color:#9e9e9e;letter-spacing:0.43px;">&lt;num&gt;</span>
<span style="left:619.8px;top:960px;font-size:16.14px;line-height:16.14px;color:#5c5c5c;letter-spacing:0.8px;">lon</span>
<span style="left:767.4px;top:960px;font-size:16.14px;line-height:16.14px;color:#9e9e9e;letter-spacing:0.43px;">&lt;num&gt;</span>
<span style="left:593.5px;top:978px;font-size:16.14px;line-height:16.14px;color:#5c5c5c;letter-spacing:1.06px;">id</span>
<span style="left:767.4px;top:978px;font-size:16.14px;line-height:16.14px;color:#9e9e9e;letter-spacing:0.43px;">&lt;num&gt;</span>
<span style="left:593.5px;top:996px;font-size:16.14px;line-height:16.14px;color:#5c5c5c;letter-spacing:0.45px;">tz</span>
<span style="left:774.6px;top:996px;font-size:16.14px;line-height:16.14px;color:#9e9e9e;letter-spacing:0.21px;">&lt;str&gt;</span>
<span style="left:593.5px;top:1014px;font-size:16.14px;line-height:16.14px;color:#5c5c5c;letter-spacing:0.05px;">icao</span>
<span style="left:774.6px;top:1014px;font-size:16.14px;line-height:16.14px;color:#9e9e9e;letter-spacing:0.21px;">&lt;str&gt;</span>
<span style="left:1046.3px;top:751px;font-size:16.4px;line-height:16.4px;color:#ffffff;letter-spacing:-0.3px;font-weight:700;">landmark</span>
<span style="left:961.5px;top:777px;font-size:16.14px;line-height:16.14px;color:#5c5c5c;letter-spacing:-2.54px;">KEY</span>
<span style="left:1115.4px;top:777px;font-size:16.14px;line-height:16.14px;color:#9e9e9e;letter-spacing:0.89px;">pk</span>
<span style="left:1171.6px;top:777px;font-size:16.14px;line-height:16.14px;color:#9e9e9e;letter-spacing:0.21px;">&lt;str&gt;</span>
<span style="left:961.5px;top:795px;font-size:16.14px;line-height:16.14px;color:#5c5c5c;letter-spacing:0.51px;">type</span>
<span style="left:1171.6px;top:795px;font-size:16.14px;line-height:16.14px;color:#9e9e9e;letter-spacing:0.21px;">&lt;str&gt;</span>
<span style="left:961.5px;top:827px;font-size:16.14px;line-height:16.14px;color:#5c5c5c;letter-spacing:1.06px;">id</span>
<span style="left:1164.4px;top:827px;font-size:16.14px;line-height:16.14px;color:#9e9e9e;letter-spacing:0.43px;">&lt;num&gt;</span>
<span style="left:961.5px;top:845px;font-size:16.14px;line-height:16.14px;color:#5c5c5c;letter-spacing:0.28px;">activity</span>
<span style="left:1171.6px;top:845px;font-size:16.14px;line-height:16.14px;color:#9e9e9e;letter-spacing:0.21px;">&lt;str&gt;</span>
<span style="left:961.5px;top:863px;font-size:16.14px;line-height:16.14px;color:#5c5c5c;letter-spacing:0.28px;">city</span>
<span style="left:1171.6px;top:863px;font-size:16.14px;line-height:16.14px;color:#9e9e9e;letter-spacing:0.21px;">&lt;str&gt;</span>
<span style="left:961.5px;top:881px;font-size:16.14px;line-height:16.14px;color:#5c5c5c;letter-spacing:0.57px;">country</span>
<span style="left:1171.6px;top:881px;font-size:16.14px;line-height:16.14px;color:#9e9e9e;letter-spacing:0.21px;">&lt;str&gt;</span>
<span style="left:961.5px;top:899px;font-size:16.14px;line-height:16.14px;color:#5c5c5c;letter-spacing:0.59px;">content</span>
<span style="left:1171.6px;top:899px;font-size:16.14px;line-height:16.14px;color:#9e9e9e;letter-spacing:0.21px;">&lt;str&gt;</span>
<span style="left:961.5px;top:917px;font-size:16.14px;line-height:16.14px;color:#5c5c5c;letter-spacing:-0.02px;">geo</span>
<span style="left:1169.8px;top:917px;font-size:16.14px;line-height:16.14px;color:#9e9e9e;letter-spacing:0.19px;">&lt;obj&gt;</span>
<span style="left:987.8px;top:935px;font-size:16.14px;line-height:16.14px;color:#5c5c5c;letter-spacing:-0.06px;">accuracy</span>
<span style="left:1171.6px;top:935px;font-size:16.14px;line-height:16.14px;color:#9e9e9e;letter-spacing:0.21px;">&lt;str&gt;</span>
<span style="left:987.8px;top:953px;font-size:16.14px;line-height:16.14px;color:#5c5c5c;letter-spacing:0.66px;">lat</span>
<span style="left:1164.4px;top:953px;font-size:16.14px;line-height:16.14px;color:#9e9e9e;letter-spacing:0.43px;">&lt;num&gt;</span>
<span style="left:987.8px;top:971px;font-size:16.14px;line-height:16.14px;color:#5c5c5c;letter-spacing:0.8px;">lon</span>
<span style="left:1164.4px;top:971px;font-size:16.14px;line-height:16.14px;color:#9e9e9e;letter-spacing:0.43px;">&lt;num&gt;</span>
<span style="left:961.5px;top:989px;font-size:16.14px;line-height:16.14px;color:#5c5c5c;letter-spacing:0.09px;">image_direct_url</span>
<span style="left:1171.6px;top:989px;font-size:16.14px;line-height:16.14px;color:#9e9e9e;letter-spacing:0.21px;">&lt;str&gt;</span>
<span style="left:961.5px;top:1007px;font-size:16.14px;line-height:16.14px;color:#5c5c5c;letter-spacing:0.5px;">name</span>
<span style="left:1171.6px;top:1007px;font-size:16.14px;line-height:16.14px;color:#9e9e9e;letter-spacing:0.21px;">&lt;str&gt;</span>
<span style="left:961.5px;top:1025px;font-size:16.14px;line-height:16.14px;color:#5c5c5c;letter-spacing:0.73px;">title</span>
<span style="left:1171.6px;top:1025px;font-size:16.14px;line-height:16.14px;color:#9e9e9e;letter-spacing:0.21px;">&lt;str&gt;</span>
<span style="left:961.5px;top:1043px;font-size:16.14px;line-height:16.14px;color:#5c5c5c;letter-spacing:1.08px;">url</span>
<span style="left:1171.6px;top:1043px;font-size:16.14px;line-height:16.14px;color:#9e9e9e;letter-spacing:0.21px;">&lt;str&gt;</span>
<span style="left:1530.7px;top:390px;font-size:16.4px;line-height:16.4px;color:#ffffff;letter-spacing:-0.51px;font-weight:700;">hotel</span>
<span style="left:1374.5px;top:416px;font-size:16.14px;line-height:16.14px;color:#5c5c5c;letter-spacing:-2.54px;">KEY</span>
<span style="left:1637.4px;top:416px;font-size:16.14px;line-height:16.14px;color:#9e9e9e;letter-spacing:0.89px;">pk</span>
<span style="left:1693.6px;top:416px;font-size:16.14px;line-height:16.14px;color:#9e9e9e;letter-spacing:0.21px;">&lt;str&gt;</span>
<span style="left:1374.5px;top:434px;font-size:16.14px;line-height:16.14px;color:#5c5c5c;letter-spacing:0.51px;">type</span>
<span style="left:1693.6px;top:434px;font-size:16.14px;line-height:16.14px;color:#9e9e9e;letter-spacing:0.21px;">&lt;str&gt;</span>
<span style="left:1374.5px;top:466px;font-size:16.14px;line-height:16.14px;color:#5c5c5c;letter-spacing:0.5px;">name</span>
<span style="left:1693.6px;top:466px;font-size:16.14px;line-height:16.14px;color:#9e9e9e;letter-spacing:0.21px;">&lt;str&gt;</span>
<span style="left:1374.5px;top:484px;font-size:16.14px;line-height:16.14px;color:#5c5c5c;letter-spacing:0.43px;">description</span>
<span style="left:1693.6px;top:484px;font-size:16.14px;line-height:16.14px;color:#9e9e9e;letter-spacing:0.21px;">&lt;str&gt;</span>
<span style="left:1374.5px;top:502px;font-size:16.14px;line-height:16.14px;color:#5c5c5c;letter-spacing:0.57px;">country</span>
<span style="left:1693.6px;top:502px;font-size:16.14px;line-height:16.14px;color:#9e9e9e;letter-spacing:0.21px;">&lt;str&gt;</span>
<span style="left:1374.5px;top:520px;font-size:16.14px;line-height:16.14px;color:#5c5c5c;letter-spacing:0.18px;">free_breakfast</span>
<span style="left:1687.1px;top:520px;font-size:16.14px;line-height:16.14px;color:#9e9e9e;letter-spacing:0.25px;">&lt;bool&gt;</span>
<span style="left:1374.5px;top:538px;font-size:16.14px;line-height:16.14px;color:#5c5c5c;letter-spacing:0.37px;">free_internet</span>
<span style="left:1687.1px;top:538px;font-size:16.14px;line-height:16.14px;color:#9e9e9e;letter-spacing:0.25px;">&lt;bool&gt;</span>
<span style="left:1374.5px;top:556px;font-size:16.14px;line-height:16.14px;color:#5c5c5c;letter-spacing:0.18px;">free_parking</span>
<span style="left:1687.1px;top:556px;font-size:16.14px;line-height:16.14px;color:#9e9e9e;letter-spacing:0.25px;">&lt;bool&gt;</span>
<span style="left:1374.5px;top:574px;font-size:16.14px;line-height:16.14px;color:#5c5c5c;letter-spacing:-0.02px;">geo</span>
<span style="left:1691.8px;top:574px;font-size:16.14px;line-height:16.14px;color:#9e9e9e;letter-spacing:0.19px;">&lt;obj&gt;</span>
<span style="left:1400.8px;top:592px;font-size:16.14px;line-height:16.14px;color:#5c5c5c;letter-spacing:-0.06px;">accuracy</span>
<span style="left:1693.6px;top:592px;font-size:16.14px;line-height:16.14px;color:#9e9e9e;letter-spacing:0.21px;">&lt;str&gt;</span>
<span style="left:1400.8px;top:610px;font-size:16.14px;line-height:16.14px;color:#5c5c5c;letter-spacing:0.66px;">lat</span>
<span style="left:1686.4px;top:610px;font-size:16.14px;line-height:16.14px;color:#9e9e9e;letter-spacing:0.43px;">&lt;num&gt;</span>
<span style="left:1400.8px;top:628px;font-size:16.14px;line-height:16.14px;color:#5c5c5c;letter-spacing:0.8px;">lon</span>
<span style="left:1686.4px;top:628px;font-size:16.14px;line-height:16.14px;color:#9e9e9e;letter-spacing:0.43px;">&lt;num&gt;</span>
<span style="left:1374.5px;top:647px;font-size:16.14px;line-height:16.14px;color:#5c5c5c;letter-spacing:1.06px;">id</span>
<span style="left:1686.4px;top:647px;font-size:16.14px;line-height:16.14px;color:#9e9e9e;letter-spacing:0.43px;">&lt;num&gt;</span>
<span style="left:1374.5px;top:665px;font-size:16.14px;line-height:16.14px;color:#5c5c5c;letter-spacing:-0.04px;">pets_ok</span>
<span style="left:1687.1px;top:665px;font-size:16.14px;line-height:16.14px;color:#9e9e9e;letter-spacing:0.25px;">&lt;bool&gt;</span>
<span style="left:1374.5px;top:683px;font-size:16.14px;line-height:16.14px;color:#5c5c5c;letter-spacing:0.05px;">public_likes</span>
<span style="left:1692.6px;top:683px;font-size:16.14px;line-height:16.14px;color:#9e9e9e;letter-spacing:0.27px;">&lt;arr&gt;</span>
<span style="left:1400.8px;top:701px;font-size:16.14px;line-height:16.14px;color:#5c5c5c;letter-spacing:0.69px;">[0]</span>
<span style="left:1693.6px;top:701px;font-size:16.14px;line-height:16.14px;color:#9e9e9e;letter-spacing:0.21px;">&lt;str&gt;</span>
<span style="left:1374.5px;top:719px;font-size:16.14px;line-height:16.14px;color:#5c5c5c;letter-spacing:0.17px;">reviews</span>
<span style="left:1692.6px;top:719px;font-size:16.14px;line-height:16.14px;color:#9e9e9e;letter-spacing:0.27px;">&lt;arr&gt;</span>
<span style="left:1400.8px;top:737px;font-size:16.14px;line-height:16.14px;color:#5c5c5c;letter-spacing:0.69px;">[0]</span>
<span style="left:1691.8px;top:737px;font-size:16.14px;line-height:16.14px;color:#9e9e9e;letter-spacing:0.19px;">&lt;obj&gt;</span>
<span style="left:1427.1px;top:755px;font-size:16.14px;line-height:16.14px;color:#5c5c5c;letter-spacing:0.78px;">author</span>
<span style="left:1693.6px;top:755px;font-size:16.14px;line-height:16.14px;color:#9e9e9e;letter-spacing:0.21px;">&lt;str&gt;</span>
<span style="left:1427.1px;top:773px;font-size:16.14px;line-height:16.14px;color:#5c5c5c;letter-spacing:0.59px;">content</span>
<span style="left:1693.6px;top:773px;font-size:16.14px;line-height:16.14px;color:#9e9e9e;letter-spacing:0.21px;">&lt;str&gt;</span>
<span style="left:1427.1px;top:791px;font-size:16.14px;line-height:16.14px;color:#5c5c5c;letter-spacing:0.49px;">date</span>
<span style="left:1693.6px;top:791px;font-size:16.14px;line-height:16.14px;color:#9e9e9e;letter-spacing:0.21px;">&lt;str&gt;</span>
<span style="left:1427.1px;top:809px;font-size:16.14px;line-height:16.14px;color:#5c5c5c;letter-spacing:0.35px;">ratings</span>
<span style="left:1691.8px;top:809px;font-size:16.14px;line-height:16.14px;color:#9e9e9e;letter-spacing:0.19px;">&lt;obj&gt;</span>
<span style="left:1453.4px;top:827px;font-size:16.14px;line-height:16.14px;color:#5c5c5c;letter-spacing:0.03px;">, internet access)</span>
<span style="left:1686.4px;top:827px;font-size:16.14px;line-height:16.14px;color:#9e9e9e;letter-spacing:0.43px;">&lt;num&gt;</span>
<span style="left:1453.4px;top:845px;font-size:16.14px;line-height:16.14px;color:#5c5c5c;letter-spacing:-0.07px;">Business service</span>
<span style="left:1686.4px;top:845px;font-size:16.14px;line-height:16.14px;color:#9e9e9e;letter-spacing:0.43px;">&lt;num&gt;</span>
<span style="left:1453.4px;top:863px;font-size:16.14px;line-height:16.14px;color:#5c5c5c;letter-spacing:0.19px;">Check in / front desk</span>
<span style="left:1686.4px;top:863px;font-size:16.14px;line-height:16.14px;color:#9e9e9e;letter-spacing:0.43px;">&lt;num&gt;</span>
<span style="left:1453.4px;top:881px;font-size:16.14px;line-height:16.14px;color:#5c5c5c;letter-spacing:-0.07px;">Cleanliness</span>
<span style="left:1686.4px;top:881px;font-size:16.14px;line-height:16.14px;color:#9e9e9e;letter-spacing:0.43px;">&lt;num&gt;</span>
<span style="left:1453.4px;top:899px;font-size:16.14px;line-height:16.14px;color:#5c5c5c;letter-spacing:0.25px;">Location</span>
<span style="left:1686.4px;top:899px;font-size:16.14px;line-height:16.14px;color:#9e9e9e;letter-spacing:0.43px;">&lt;num&gt;</span>
<span style="left:1453.4px;top:917px;font-size:16.14px;line-height:16.14px;color:#5c5c5c;letter-spacing:0.17px;">Overall</span>
<span style="left:1686.4px;top:917px;font-size:16.14px;line-height:16.14px;color:#9e9e9e;letter-spacing:0.43px;">&lt;num&gt;</span>
<span style="left:1453.4px;top:935px;font-size:16.14px;line-height:16.14px;color:#5c5c5c;letter-spacing:-0.08px;">Rooms</span>
<span style="left:1686.4px;top:935px;font-size:16.14px;line-height:16.14px;color:#9e9e9e;letter-spacing:0.43px;">&lt;num&gt;</span>
<span style="left:1453.4px;top:953px;font-size:16.14px;line-height:16.14px;color:#5c5c5c;letter-spacing:-0.27px;">Service</span>
<span style="left:1686.4px;top:953px;font-size:16.14px;line-height:16.14px;color:#9e9e9e;letter-spacing:0.43px;">&lt;num&gt;</span>
<span style="left:1453.4px;top:971px;font-size:16.14px;line-height:16.14px;color:#5c5c5c;letter-spacing:0.02px;">Sleep Quality</span>
<span style="left:1686.4px;top:971px;font-size:16.14px;line-height:16.14px;color:#9e9e9e;letter-spacing:0.43px;">&lt;num&gt;</span>
<span style="left:1453.4px;top:989px;font-size:16.14px;line-height:16.14px;color:#5c5c5c;letter-spacing:0.14px;">Value</span>
<span style="left:1686.4px;top:989px;font-size:16.14px;line-height:16.14px;color:#9e9e9e;letter-spacing:0.43px;">&lt;num&gt;</span>
<span style="left:1374.5px;top:1008px;font-size:16.14px;line-height:16.14px;color:#5c5c5c;letter-spacing:0.73px;">title</span>
<span style="left:1693.6px;top:1008px;font-size:16.14px;line-height:16.14px;color:#9e9e9e;letter-spacing:0.21px;">&lt;str&gt;</span>
<span style="left:1374.5px;top:1026px;font-size:16.14px;line-height:16.14px;color:#5c5c5c;letter-spacing:-0.19px;">vacancy</span>
<span style="left:1687.1px;top:1026px;font-size:16.14px;line-height:16.14px;color:#9e9e9e;letter-spacing:0.25px;">&lt;bool&gt;</span>
<span style="left:1374.5px;top:1044px;font-size:16.14px;line-height:16.14px;color:#5c5c5c;letter-spacing:1.08px;">url</span>
<span style="left:1693.6px;top:1044px;font-size:16.14px;line-height:16.14px;color:#9e9e9e;letter-spacing:0.21px;">&lt;str&gt;</span>
<span style="left:1675.8px;top:213px;font-size:21.52px;line-height:21.52px;color:#333;-webkit-text-stroke:0.7px #333;letter-spacing:0.41px;">Show all</span>
<span style="left:1675.8px;top:261px;font-size:21.52px;line-height:21.52px;color:#444;letter-spacing:0.33px;">travel-sample</span>
<span style="left:1944.6px;top:173px;font-size:21.52px;line-height:21.52px;color:#ffffff;letter-spacing:0.4px;">Properties</span>
<span style="left:1945.8px;top:218px;font-size:21.52px;line-height:21.52px;color:#444;letter-spacing:0.48px;">Model name</span>
<span style="left:2253.6px;top:218px;font-size:21.52px;line-height:21.52px;color:#444;letter-spacing:0.54px;">travel</span>
<span style="left:1945.8px;top:268px;font-size:21.52px;line-height:21.52px;color:#444;letter-spacing:0.45px;">Description</span>
<span style="left:2487.5px;top:268px;font-size:21.52px;line-height:21.52px;color:#444;letter-spacing:-0.69px;">...</span>
<span style="left:2253.6px;top:268px;font-size:21.52px;line-height:21.52px;color:#444;letter-spacing:0.33px;">Model for the travel-...</span>
<span style="left:1945.8px;top:318px;font-size:21.52px;line-height:21.52px;color:#444;letter-spacing:0.87px;">Author</span>
<span style="left:2253.6px;top:318px;font-size:21.52px;line-height:21.52px;color:#444;letter-spacing:-0.65px;">Pascal</span>
<span style="left:1945.8px;top:368px;font-size:21.52px;line-height:21.52px;color:#444;letter-spacing:0.33px;">Version</span>
<span style="left:2253.6px;top:368px;font-size:21.52px;line-height:21.52px;color:#444;letter-spacing:0.05px;">1</span>
<span style="left:1945.8px;top:418px;font-size:21.52px;line-height:21.52px;color:#444;letter-spacing:0.41px;">Comments</span>
<span style="left:2487.5px;top:418px;font-size:21.52px;line-height:21.52px;color:#444;letter-spacing:-0.69px;">...</span>
<span style="left:1945.8px;top:468px;font-size:21.52px;line-height:21.52px;color:#444;letter-spacing:0.23px;">DB vendor</span>
<span style="left:2253.6px;top:468px;font-size:21.52px;line-height:21.52px;color:#444;letter-spacing:-0.11px;">Couchbase</span>
<span style="left:1945.8px;top:518px;font-size:21.52px;line-height:21.52px;color:#444;letter-spacing:0.08px;">DB version</span>
<span style="left:2253.6px;top:518px;font-size:21.52px;line-height:21.52px;color:#444;letter-spacing:-0.21px;">v4.6</span>
</div>
</div></body></html>
